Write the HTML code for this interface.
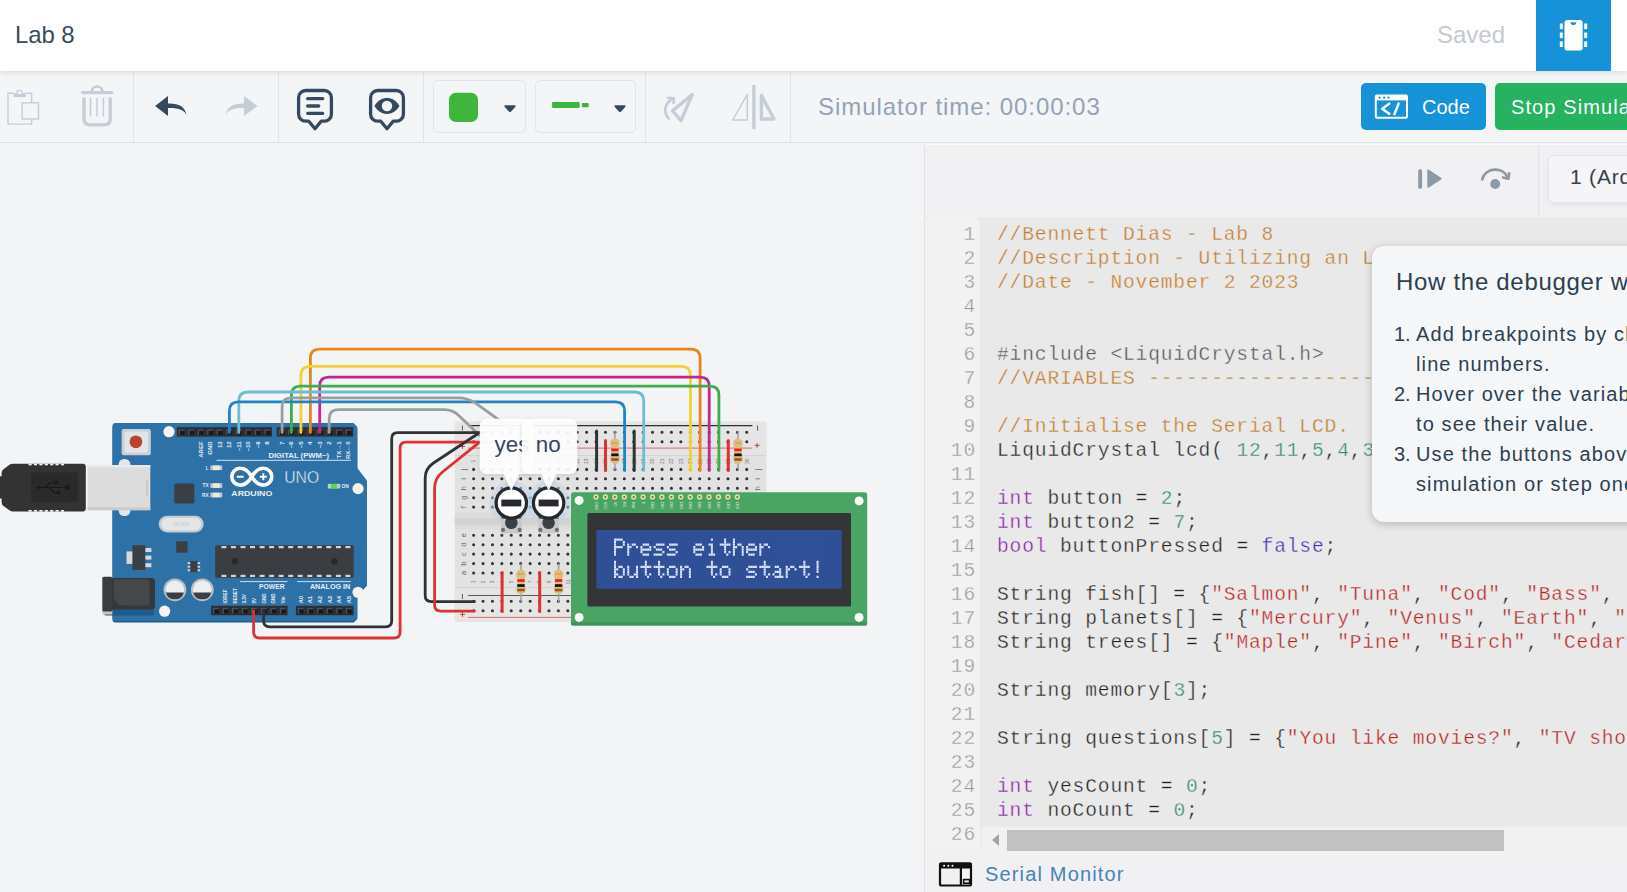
<!DOCTYPE html>
<html>
<head>
<meta charset="utf-8">
<title>Lab 8</title>
<style>
*{box-sizing:border-box;margin:0;padding:0}
html,body{width:1627px;height:892px;overflow:hidden;background:#f3f4f6;font-family:"Liberation Sans",sans-serif;}
#hdr{position:absolute;left:0;top:0;width:1627px;height:71px;background:#fff;z-index:5;box-shadow:0 1px 6px rgba(0,0,0,.13);}
#title{position:absolute;left:15px;top:21px;font-size:24px;color:#3a4b5c;letter-spacing:-0.100px}
#saved{position:absolute;left:1437px;top:21px;font-size:24px;color:#c5cad1;}
#chip{position:absolute;left:1536px;top:0;width:75px;height:71px;background:#1592d8;}
#tb{position:absolute;left:0;top:70px;width:1627px;height:73px;background:#f3f5f7;border-bottom:1px solid #dcdfe3;z-index:4}
.sep{position:absolute;top:0;width:1px;height:72px;background:#e0e3e7}
#simtime{position:absolute;left:818px;top:23px;font-size:24px;color:#93a3b5;letter-spacing:0.940px;white-space:nowrap}
.btn{position:absolute;top:13px;height:47px;border-radius:5px;color:#fff;font-size:20px;line-height:47px;white-space:nowrap;overflow:hidden}
#codebtn{left:1361px;width:125px;background:#1592d8;}
#stopbtn{left:1495px;width:140px;background:#27b25f;padding-left:16px;padding-top:0.600px;letter-spacing:1.100px}
.dd{position:absolute;top:10px;height:53px;border:1px solid #e1e4e8;border-radius:5px}
#canvas{position:absolute;left:0;top:144px;width:925px;height:748px;background:#f3f4f6;overflow:hidden}
#cp{position:absolute;left:924px;top:144px;width:703px;height:748px;background:#f1f1f3;border-left:1px solid #e1e3e6;border-top:1px solid #fafafb;overflow:hidden}
#cptop{position:absolute;left:0;top:-1px;width:703px;height:72px;}
#ed{position:absolute;left:1px;top:72px;width:702px;height:634px;background:#e9e9e9;overflow:hidden}
#gut{position:absolute;left:0;top:0;width:54px;height:634px;background:#f2f2f2;border-radius:6px 6px 0 0}
.ln{position:absolute;left:0;width:50px;text-align:right;font:19.600px/24px "Liberation Mono",monospace;letter-spacing:0.840px;color:#999;-webkit-text-stroke:0.350px #f3f3f3}
.cl{position:absolute;left:71px;white-space:pre;font:19.600px/24px "Liberation Mono",monospace;letter-spacing:0.840px;color:#222;-webkit-text-stroke:0.350px #e9e9e9}
.c{color:#c47c2c}.k{color:#8a1ea8}.s{color:#b8251f}.n{color:#2f8a6a}.p{color:#555}.b{color:#3b2fb5}
#lines{position:absolute;left:0;top:0px}
#hs{position:absolute;left:55px;top:610px;width:647px;height:24px;background:#f1f1f1}
#hst{position:absolute;left:26px;top:3px;width:497px;height:20.500px;background:#c1c1c1}
#hsa{position:absolute;left:11px;top:7px;width:0;height:0;border-top:6px solid transparent;border-bottom:6px solid transparent;border-right:7px solid #a3a3a3}
#sm{position:absolute;left:0;top:706px;width:703px;height:42px;background:#f1f1f3}
#smt{position:absolute;left:60px;top:12px;font-size:20px;color:#4683b5;letter-spacing:1.160px;white-space:nowrap}
#brd{position:absolute;left:623px;top:11px;width:200px;height:48px;border:1px solid #e4e5e8;border-radius:6px;background:#f5f5f7;box-shadow:0 2px 5px rgba(0,0,0,.06);font-size:21px;line-height:42px;padding-left:21px;color:#364049;letter-spacing:0.800px;white-space:nowrap}
#tip{position:absolute;left:447px;top:101px;width:300px;height:276px;background:#f6f7f9;border-radius:12px;box-shadow:0 2px 8px rgba(0,0,0,.22);color:#2c4150}
#tip h3{position:absolute;left:24px;top:22px;font-size:24px;font-weight:normal;white-space:nowrap;letter-spacing:0.700px}
#tip .li{position:absolute;left:22px;font-size:20px;line-height:24px;white-space:nowrap}
#tip .lt{position:absolute;left:44px;font-size:20px;line-height:24px;letter-spacing:1.120px;white-space:nowrap}
</style>
</head>
<body>
<div id="hdr">
  <div id="title">Lab 8</div>
  <div id="saved">Saved</div>
  <div id="chip"><svg width="75" height="70" viewBox="1536 0 75 70" style="position:absolute;left:0;top:0">
<rect x="1564.5" y="20" width="18.2" height="30.5" rx="2.8" fill="#fff"/>
<path d="M1570.6 22.2h5.6a2.8 2.8 0 0 1-5.6 0z" fill="#1592d8"/>
<g fill="#fff"><rect x="1559.8" y="23.5" width="3" height="5.6"/><rect x="1559.8" y="32.5" width="3" height="5.6"/><rect x="1559.8" y="41.4" width="3" height="5.6"/>
<rect x="1584.2" y="23.5" width="3" height="5.6"/><rect x="1584.2" y="32.5" width="3" height="5.6"/><rect x="1584.2" y="41.4" width="3" height="5.6"/></g>
</svg></div>
</div>
<div id="tb">
  <div class="sep" style="left:133px"></div>
  <div class="sep" style="left:278px"></div>
  <div class="sep" style="left:423px"></div>
  <div class="sep" style="left:645px"></div>
  <div class="sep" style="left:790px"></div>
  <div class="dd" style="left:433px;width:93px"></div>
  <div class="dd" style="left:535px;width:101px"></div>
  <svg id="tbi" width="800" height="73" viewBox="0 70 800 73" style="position:absolute;left:0;top:0">
<!-- paste -->
<g fill="none" stroke="#c5ced8" stroke-width="1.4">
<path d="M13.5 93.3H8v30.8h23.6v-4.6M25.8 93.3h5.8v8.6"/>
<path d="M16.6 89.9h6v3.4h3.2v3.8H13.5v-3.8h3.1z" fill="#c5ced8" stroke="none"/>
<rect x="17.9" y="91" width="3.4" height="3" fill="#f3f5f7" stroke="none"/>
<rect x="22.2" y="102.8" width="16.3" height="16.2"/>
</g>
<!-- trash -->
<g fill="none" stroke="#c5ced8" stroke-linecap="round">
<path d="M82.4 92.6h29.4" stroke-width="3.2"/>
<path d="M91.8 91.4c0-6.6 10.6-6.6 10.6 0" stroke-width="2.6"/>
<path d="M84 97.5v21.6q0 5.8 5.8 5.8h14.6q5.8 0 5.8-5.8V97.5" stroke-width="3.4" stroke-linecap="butt"/>
<path d="M90.5 97.8v18.6M97 97.8v18.6M103.4 97.8v18.6" stroke-width="1.5" stroke-linecap="butt"/>
</g>
<!-- undo -->
<path d="M155.100 106l12.900-9.900v7.500c10-0.400 17.500 3 18.500 11.900c-1.500-5-7-7.600-18.500-7.400v7.800z" fill="#34495e"/>
<!-- redo -->
<path d="M257.500 106l-13.400-9.900v7.500c-10-0.400-17.500 3-18.500 11.900c1.500-5 7-7.600 18.500-7.400v7.800z" fill="#c5ced8"/>
<!-- note -->
<g fill="none" stroke="#34495e" stroke-width="3.3" stroke-linejoin="round" stroke-linecap="round">
<path d="M305.6 90.5h18.8a7 7 0 0 1 7 7v16.7a7 7 0 0 1-7 7h-3.2l-6.2 7.6l-6.2-7.6h-3.2a7 7 0 0 1-7-7V97.5a7 7 0 0 1 7-7z"/>
<path d="M307.7 98.7h15M307.7 106h11M307.7 113.3h15"/>
<path d="M377.6 90.5h18.8a7 7 0 0 1 7 7v16.7a7 7 0 0 1-7 7h-3.2l-6.2 7.6l-6.2-7.6h-3.2a7 7 0 0 1-7-7V97.5a7 7 0 0 1 7-7z"/>
</g>
<path fill-rule="evenodd" d="M374.5 106c6-10.6 19-10.6 25 0c-6 10.6-19 10.6-25 0zM392.2 106a5.2 5.2 0 1 0-10.4 0a5.2 5.2 0 1 0 10.4 0z" fill="#34495e"/>
<!-- colour dropdown -->
<rect x="449" y="92.8" width="29" height="29.2" rx="7" fill="#40b53e"/>
<path d="M505.2 105.3h9.6q1.4 0.2 0.6 1.4l-4.5 5q-0.9 0.8-1.8 0l-4.5-5q-0.8-1.2 0.6-1.4z" fill="#34495e"/>
<rect x="552.1" y="102" width="27.5" height="5.9" rx="0.8" fill="#40b53e"/>
<rect x="581.9" y="102.9" width="6.8" height="4.3" rx="0.8" fill="#40b53e"/>
<path d="M615.2 105.3h9.6q1.4 0.2 0.6 1.4l-4.5 5q-0.9 0.8-1.8 0l-4.5-5q-0.8-1.2 0.6-1.4z" fill="#34495e"/>
<!-- rotate -->
<g fill="none" stroke="#c5ced8" stroke-linecap="round" stroke-linejoin="round">
<path d="M692.2 94.6L672.6 110.8L680.9 120.6z" stroke-width="3.4"/>
<path d="M668.8 118.4c-5.6-5.6-4.8-13.6 3-19.6" stroke-width="2.8"/>
<path d="M668.2 97.8l5.6 0.4l-0.2 4.8" stroke-width="2.6"/>
</g>
<!-- mirror -->
<g fill="none" stroke="#c5ced8" stroke-linecap="round" stroke-linejoin="round">
<path d="M753.9 86.2v41.6" stroke-width="3.4"/>
<path d="M747.3 94.4v25.6h-14.6z" stroke-width="1.5"/>
<path d="M761.4 95.4v23.6h12.6z" stroke-width="3.4"/>
</g>
</svg>
  <div id="simtime">Simulator time: 00:00:03</div>
  <div class="btn" id="codebtn"><svg width="36" height="28" viewBox="1373 93 36 28" style="position:absolute;left:12px;top:10px">
<rect x="1375.8" y="95.5" width="31.2" height="22.2" rx="1.2" fill="none" stroke="#fff" stroke-width="2"/>
<rect x="1375.8" y="95" width="31.2" height="5.4" fill="#fff"/>
<circle cx="1379.6" cy="97.6" r="1.15" fill="#1592d8"/><circle cx="1384.1" cy="97.6" r="1.15" fill="#1592d8"/><circle cx="1388.6" cy="97.6" r="1.15" fill="#1592d8"/>
<path d="M1389.2 103.8l-7 5l7 5M1398.6 103.6l-4.2 10.6" fill="none" stroke="#fff" stroke-width="2.5" stroke-linecap="round" stroke-linejoin="round"/>
</svg><span style="position:absolute;left:61px;top:0.600px">Code</span></div>
  <div class="btn" id="stopbtn">Stop Simulation</div>
</div>
<div id="canvas"><!--CANVAS--><svg width="925" height="748" viewBox="0 144 925 748" style="position:absolute;left:0;top:0" font-family="Liberation Sans, sans-serif">
<rect x="454.8" y="421.5" width="311.59999999999997" height="200.5" rx="2.5" fill="#e2e2e2"/>
<rect x="454.8" y="422.5" width="311.59999999999997" height="32.5" fill="#e5e5e5"/>
<rect x="454.8" y="588" width="311.59999999999997" height="33" fill="#e5e5e5"/>
<rect x="454.8" y="512.4" width="311.59999999999997" height="16.8" fill="#dcdcdc"/>
<rect x="454.8" y="518" width="311.59999999999997" height="6.8" fill="#d3d3d3"/>
<rect x="454.8" y="455" width="311.59999999999997" height="0.9" fill="#d2d2d2"/><rect x="454.8" y="587.3" width="311.59999999999997" height="0.9" fill="#d2d2d2"/>
<path d="M472.1 469.4a1.55 1.55 0 1 0 3.1 0a1.55 1.55 0 1 0-3.1 0zM472.1 478.8a1.55 1.55 0 1 0 3.1 0a1.55 1.55 0 1 0-3.1 0zM472.1 488.2a1.55 1.55 0 1 0 3.1 0a1.55 1.55 0 1 0-3.1 0zM472.1 497.7a1.55 1.55 0 1 0 3.1 0a1.55 1.55 0 1 0-3.1 0zM472.1 507.1a1.55 1.55 0 1 0 3.1 0a1.55 1.55 0 1 0-3.1 0zM472.1 535.3a1.55 1.55 0 1 0 3.1 0a1.55 1.55 0 1 0-3.1 0zM472.1 544.7a1.55 1.55 0 1 0 3.1 0a1.55 1.55 0 1 0-3.1 0zM472.1 554.1a1.55 1.55 0 1 0 3.1 0a1.55 1.55 0 1 0-3.1 0zM472.1 563.6a1.55 1.55 0 1 0 3.1 0a1.55 1.55 0 1 0-3.1 0zM472.1 573.0a1.55 1.55 0 1 0 3.1 0a1.55 1.55 0 1 0-3.1 0zM472.1 432.3a1.55 1.55 0 1 0 3.1 0a1.55 1.55 0 1 0-3.1 0zM472.1 441.7a1.55 1.55 0 1 0 3.1 0a1.55 1.55 0 1 0-3.1 0zM472.1 601.2a1.55 1.55 0 1 0 3.1 0a1.55 1.55 0 1 0-3.1 0zM472.1 610.7a1.55 1.55 0 1 0 3.1 0a1.55 1.55 0 1 0-3.1 0zM481.5 469.4a1.55 1.55 0 1 0 3.1 0a1.55 1.55 0 1 0-3.1 0zM481.5 478.8a1.55 1.55 0 1 0 3.1 0a1.55 1.55 0 1 0-3.1 0zM481.5 488.2a1.55 1.55 0 1 0 3.1 0a1.55 1.55 0 1 0-3.1 0zM481.5 497.7a1.55 1.55 0 1 0 3.1 0a1.55 1.55 0 1 0-3.1 0zM481.5 507.1a1.55 1.55 0 1 0 3.1 0a1.55 1.55 0 1 0-3.1 0zM481.5 535.3a1.55 1.55 0 1 0 3.1 0a1.55 1.55 0 1 0-3.1 0zM481.5 544.7a1.55 1.55 0 1 0 3.1 0a1.55 1.55 0 1 0-3.1 0zM481.5 554.1a1.55 1.55 0 1 0 3.1 0a1.55 1.55 0 1 0-3.1 0zM481.5 563.6a1.55 1.55 0 1 0 3.1 0a1.55 1.55 0 1 0-3.1 0zM481.5 573.0a1.55 1.55 0 1 0 3.1 0a1.55 1.55 0 1 0-3.1 0zM481.5 432.3a1.55 1.55 0 1 0 3.1 0a1.55 1.55 0 1 0-3.1 0zM481.5 441.7a1.55 1.55 0 1 0 3.1 0a1.55 1.55 0 1 0-3.1 0zM481.5 601.2a1.55 1.55 0 1 0 3.1 0a1.55 1.55 0 1 0-3.1 0zM481.5 610.7a1.55 1.55 0 1 0 3.1 0a1.55 1.55 0 1 0-3.1 0zM490.9 469.4a1.55 1.55 0 1 0 3.1 0a1.55 1.55 0 1 0-3.1 0zM490.9 478.8a1.55 1.55 0 1 0 3.1 0a1.55 1.55 0 1 0-3.1 0zM490.9 488.2a1.55 1.55 0 1 0 3.1 0a1.55 1.55 0 1 0-3.1 0zM490.9 497.7a1.55 1.55 0 1 0 3.1 0a1.55 1.55 0 1 0-3.1 0zM490.9 507.1a1.55 1.55 0 1 0 3.1 0a1.55 1.55 0 1 0-3.1 0zM490.9 535.3a1.55 1.55 0 1 0 3.1 0a1.55 1.55 0 1 0-3.1 0zM490.9 544.7a1.55 1.55 0 1 0 3.1 0a1.55 1.55 0 1 0-3.1 0zM490.9 554.1a1.55 1.55 0 1 0 3.1 0a1.55 1.55 0 1 0-3.1 0zM490.9 563.6a1.55 1.55 0 1 0 3.1 0a1.55 1.55 0 1 0-3.1 0zM490.9 573.0a1.55 1.55 0 1 0 3.1 0a1.55 1.55 0 1 0-3.1 0zM490.9 432.3a1.55 1.55 0 1 0 3.1 0a1.55 1.55 0 1 0-3.1 0zM490.9 441.7a1.55 1.55 0 1 0 3.1 0a1.55 1.55 0 1 0-3.1 0zM490.9 601.2a1.55 1.55 0 1 0 3.1 0a1.55 1.55 0 1 0-3.1 0zM490.9 610.7a1.55 1.55 0 1 0 3.1 0a1.55 1.55 0 1 0-3.1 0zM500.3 469.4a1.55 1.55 0 1 0 3.1 0a1.55 1.55 0 1 0-3.1 0zM500.3 478.8a1.55 1.55 0 1 0 3.1 0a1.55 1.55 0 1 0-3.1 0zM500.3 488.2a1.55 1.55 0 1 0 3.1 0a1.55 1.55 0 1 0-3.1 0zM500.3 497.7a1.55 1.55 0 1 0 3.1 0a1.55 1.55 0 1 0-3.1 0zM500.3 507.1a1.55 1.55 0 1 0 3.1 0a1.55 1.55 0 1 0-3.1 0zM500.3 535.3a1.55 1.55 0 1 0 3.1 0a1.55 1.55 0 1 0-3.1 0zM500.3 544.7a1.55 1.55 0 1 0 3.1 0a1.55 1.55 0 1 0-3.1 0zM500.3 554.1a1.55 1.55 0 1 0 3.1 0a1.55 1.55 0 1 0-3.1 0zM500.3 563.6a1.55 1.55 0 1 0 3.1 0a1.55 1.55 0 1 0-3.1 0zM500.3 573.0a1.55 1.55 0 1 0 3.1 0a1.55 1.55 0 1 0-3.1 0zM500.3 432.3a1.55 1.55 0 1 0 3.1 0a1.55 1.55 0 1 0-3.1 0zM500.3 441.7a1.55 1.55 0 1 0 3.1 0a1.55 1.55 0 1 0-3.1 0zM500.3 601.2a1.55 1.55 0 1 0 3.1 0a1.55 1.55 0 1 0-3.1 0zM500.3 610.7a1.55 1.55 0 1 0 3.1 0a1.55 1.55 0 1 0-3.1 0zM509.7 469.4a1.55 1.55 0 1 0 3.1 0a1.55 1.55 0 1 0-3.1 0zM509.7 478.8a1.55 1.55 0 1 0 3.1 0a1.55 1.55 0 1 0-3.1 0zM509.7 488.2a1.55 1.55 0 1 0 3.1 0a1.55 1.55 0 1 0-3.1 0zM509.7 497.7a1.55 1.55 0 1 0 3.1 0a1.55 1.55 0 1 0-3.1 0zM509.7 507.1a1.55 1.55 0 1 0 3.1 0a1.55 1.55 0 1 0-3.1 0zM509.7 535.3a1.55 1.55 0 1 0 3.1 0a1.55 1.55 0 1 0-3.1 0zM509.7 544.7a1.55 1.55 0 1 0 3.1 0a1.55 1.55 0 1 0-3.1 0zM509.7 554.1a1.55 1.55 0 1 0 3.1 0a1.55 1.55 0 1 0-3.1 0zM509.7 563.6a1.55 1.55 0 1 0 3.1 0a1.55 1.55 0 1 0-3.1 0zM509.7 573.0a1.55 1.55 0 1 0 3.1 0a1.55 1.55 0 1 0-3.1 0zM509.7 432.3a1.55 1.55 0 1 0 3.1 0a1.55 1.55 0 1 0-3.1 0zM509.7 441.7a1.55 1.55 0 1 0 3.1 0a1.55 1.55 0 1 0-3.1 0zM509.7 601.2a1.55 1.55 0 1 0 3.1 0a1.55 1.55 0 1 0-3.1 0zM509.7 610.7a1.55 1.55 0 1 0 3.1 0a1.55 1.55 0 1 0-3.1 0zM519.2 469.4a1.55 1.55 0 1 0 3.1 0a1.55 1.55 0 1 0-3.1 0zM519.2 478.8a1.55 1.55 0 1 0 3.1 0a1.55 1.55 0 1 0-3.1 0zM519.2 488.2a1.55 1.55 0 1 0 3.1 0a1.55 1.55 0 1 0-3.1 0zM519.2 497.7a1.55 1.55 0 1 0 3.1 0a1.55 1.55 0 1 0-3.1 0zM519.2 507.1a1.55 1.55 0 1 0 3.1 0a1.55 1.55 0 1 0-3.1 0zM519.2 535.3a1.55 1.55 0 1 0 3.1 0a1.55 1.55 0 1 0-3.1 0zM519.2 544.7a1.55 1.55 0 1 0 3.1 0a1.55 1.55 0 1 0-3.1 0zM519.2 554.1a1.55 1.55 0 1 0 3.1 0a1.55 1.55 0 1 0-3.1 0zM519.2 563.6a1.55 1.55 0 1 0 3.1 0a1.55 1.55 0 1 0-3.1 0zM519.2 573.0a1.55 1.55 0 1 0 3.1 0a1.55 1.55 0 1 0-3.1 0zM519.2 432.3a1.55 1.55 0 1 0 3.1 0a1.55 1.55 0 1 0-3.1 0zM519.2 441.7a1.55 1.55 0 1 0 3.1 0a1.55 1.55 0 1 0-3.1 0zM519.2 601.2a1.55 1.55 0 1 0 3.1 0a1.55 1.55 0 1 0-3.1 0zM519.2 610.7a1.55 1.55 0 1 0 3.1 0a1.55 1.55 0 1 0-3.1 0zM528.6 469.4a1.55 1.55 0 1 0 3.1 0a1.55 1.55 0 1 0-3.1 0zM528.6 478.8a1.55 1.55 0 1 0 3.1 0a1.55 1.55 0 1 0-3.1 0zM528.6 488.2a1.55 1.55 0 1 0 3.1 0a1.55 1.55 0 1 0-3.1 0zM528.6 497.7a1.55 1.55 0 1 0 3.1 0a1.55 1.55 0 1 0-3.1 0zM528.6 507.1a1.55 1.55 0 1 0 3.1 0a1.55 1.55 0 1 0-3.1 0zM528.6 535.3a1.55 1.55 0 1 0 3.1 0a1.55 1.55 0 1 0-3.1 0zM528.6 544.7a1.55 1.55 0 1 0 3.1 0a1.55 1.55 0 1 0-3.1 0zM528.6 554.1a1.55 1.55 0 1 0 3.1 0a1.55 1.55 0 1 0-3.1 0zM528.6 563.6a1.55 1.55 0 1 0 3.1 0a1.55 1.55 0 1 0-3.1 0zM528.6 573.0a1.55 1.55 0 1 0 3.1 0a1.55 1.55 0 1 0-3.1 0zM528.6 432.3a1.55 1.55 0 1 0 3.1 0a1.55 1.55 0 1 0-3.1 0zM528.6 441.7a1.55 1.55 0 1 0 3.1 0a1.55 1.55 0 1 0-3.1 0zM528.6 601.2a1.55 1.55 0 1 0 3.1 0a1.55 1.55 0 1 0-3.1 0zM528.6 610.7a1.55 1.55 0 1 0 3.1 0a1.55 1.55 0 1 0-3.1 0zM538.0 469.4a1.55 1.55 0 1 0 3.1 0a1.55 1.55 0 1 0-3.1 0zM538.0 478.8a1.55 1.55 0 1 0 3.1 0a1.55 1.55 0 1 0-3.1 0zM538.0 488.2a1.55 1.55 0 1 0 3.1 0a1.55 1.55 0 1 0-3.1 0zM538.0 497.7a1.55 1.55 0 1 0 3.1 0a1.55 1.55 0 1 0-3.1 0zM538.0 507.1a1.55 1.55 0 1 0 3.1 0a1.55 1.55 0 1 0-3.1 0zM538.0 535.3a1.55 1.55 0 1 0 3.1 0a1.55 1.55 0 1 0-3.1 0zM538.0 544.7a1.55 1.55 0 1 0 3.1 0a1.55 1.55 0 1 0-3.1 0zM538.0 554.1a1.55 1.55 0 1 0 3.1 0a1.55 1.55 0 1 0-3.1 0zM538.0 563.6a1.55 1.55 0 1 0 3.1 0a1.55 1.55 0 1 0-3.1 0zM538.0 573.0a1.55 1.55 0 1 0 3.1 0a1.55 1.55 0 1 0-3.1 0zM538.0 432.3a1.55 1.55 0 1 0 3.1 0a1.55 1.55 0 1 0-3.1 0zM538.0 441.7a1.55 1.55 0 1 0 3.1 0a1.55 1.55 0 1 0-3.1 0zM538.0 601.2a1.55 1.55 0 1 0 3.1 0a1.55 1.55 0 1 0-3.1 0zM538.0 610.7a1.55 1.55 0 1 0 3.1 0a1.55 1.55 0 1 0-3.1 0zM547.4 469.4a1.55 1.55 0 1 0 3.1 0a1.55 1.55 0 1 0-3.1 0zM547.4 478.8a1.55 1.55 0 1 0 3.1 0a1.55 1.55 0 1 0-3.1 0zM547.4 488.2a1.55 1.55 0 1 0 3.1 0a1.55 1.55 0 1 0-3.1 0zM547.4 497.7a1.55 1.55 0 1 0 3.1 0a1.55 1.55 0 1 0-3.1 0zM547.4 507.1a1.55 1.55 0 1 0 3.1 0a1.55 1.55 0 1 0-3.1 0zM547.4 535.3a1.55 1.55 0 1 0 3.1 0a1.55 1.55 0 1 0-3.1 0zM547.4 544.7a1.55 1.55 0 1 0 3.1 0a1.55 1.55 0 1 0-3.1 0zM547.4 554.1a1.55 1.55 0 1 0 3.1 0a1.55 1.55 0 1 0-3.1 0zM547.4 563.6a1.55 1.55 0 1 0 3.1 0a1.55 1.55 0 1 0-3.1 0zM547.4 573.0a1.55 1.55 0 1 0 3.1 0a1.55 1.55 0 1 0-3.1 0zM547.4 432.3a1.55 1.55 0 1 0 3.1 0a1.55 1.55 0 1 0-3.1 0zM547.4 441.7a1.55 1.55 0 1 0 3.1 0a1.55 1.55 0 1 0-3.1 0zM547.4 601.2a1.55 1.55 0 1 0 3.1 0a1.55 1.55 0 1 0-3.1 0zM547.4 610.7a1.55 1.55 0 1 0 3.1 0a1.55 1.55 0 1 0-3.1 0zM556.8 469.4a1.55 1.55 0 1 0 3.1 0a1.55 1.55 0 1 0-3.1 0zM556.8 478.8a1.55 1.55 0 1 0 3.1 0a1.55 1.55 0 1 0-3.1 0zM556.8 488.2a1.55 1.55 0 1 0 3.1 0a1.55 1.55 0 1 0-3.1 0zM556.8 497.7a1.55 1.55 0 1 0 3.1 0a1.55 1.55 0 1 0-3.1 0zM556.8 507.1a1.55 1.55 0 1 0 3.1 0a1.55 1.55 0 1 0-3.1 0zM556.8 535.3a1.55 1.55 0 1 0 3.1 0a1.55 1.55 0 1 0-3.1 0zM556.8 544.7a1.55 1.55 0 1 0 3.1 0a1.55 1.55 0 1 0-3.1 0zM556.8 554.1a1.55 1.55 0 1 0 3.1 0a1.55 1.55 0 1 0-3.1 0zM556.8 563.6a1.55 1.55 0 1 0 3.1 0a1.55 1.55 0 1 0-3.1 0zM556.8 573.0a1.55 1.55 0 1 0 3.1 0a1.55 1.55 0 1 0-3.1 0zM556.8 432.3a1.55 1.55 0 1 0 3.1 0a1.55 1.55 0 1 0-3.1 0zM556.8 441.7a1.55 1.55 0 1 0 3.1 0a1.55 1.55 0 1 0-3.1 0zM556.8 601.2a1.55 1.55 0 1 0 3.1 0a1.55 1.55 0 1 0-3.1 0zM556.8 610.7a1.55 1.55 0 1 0 3.1 0a1.55 1.55 0 1 0-3.1 0zM566.3 469.4a1.55 1.55 0 1 0 3.1 0a1.55 1.55 0 1 0-3.1 0zM566.3 478.8a1.55 1.55 0 1 0 3.1 0a1.55 1.55 0 1 0-3.1 0zM566.3 488.2a1.55 1.55 0 1 0 3.1 0a1.55 1.55 0 1 0-3.1 0zM566.3 497.7a1.55 1.55 0 1 0 3.1 0a1.55 1.55 0 1 0-3.1 0zM566.3 507.1a1.55 1.55 0 1 0 3.1 0a1.55 1.55 0 1 0-3.1 0zM566.3 535.3a1.55 1.55 0 1 0 3.1 0a1.55 1.55 0 1 0-3.1 0zM566.3 544.7a1.55 1.55 0 1 0 3.1 0a1.55 1.55 0 1 0-3.1 0zM566.3 554.1a1.55 1.55 0 1 0 3.1 0a1.55 1.55 0 1 0-3.1 0zM566.3 563.6a1.55 1.55 0 1 0 3.1 0a1.55 1.55 0 1 0-3.1 0zM566.3 573.0a1.55 1.55 0 1 0 3.1 0a1.55 1.55 0 1 0-3.1 0zM566.3 432.3a1.55 1.55 0 1 0 3.1 0a1.55 1.55 0 1 0-3.1 0zM566.3 441.7a1.55 1.55 0 1 0 3.1 0a1.55 1.55 0 1 0-3.1 0zM566.3 601.2a1.55 1.55 0 1 0 3.1 0a1.55 1.55 0 1 0-3.1 0zM566.3 610.7a1.55 1.55 0 1 0 3.1 0a1.55 1.55 0 1 0-3.1 0zM575.7 469.4a1.55 1.55 0 1 0 3.1 0a1.55 1.55 0 1 0-3.1 0zM575.7 478.8a1.55 1.55 0 1 0 3.1 0a1.55 1.55 0 1 0-3.1 0zM575.7 488.2a1.55 1.55 0 1 0 3.1 0a1.55 1.55 0 1 0-3.1 0zM575.7 497.7a1.55 1.55 0 1 0 3.1 0a1.55 1.55 0 1 0-3.1 0zM575.7 507.1a1.55 1.55 0 1 0 3.1 0a1.55 1.55 0 1 0-3.1 0zM575.7 535.3a1.55 1.55 0 1 0 3.1 0a1.55 1.55 0 1 0-3.1 0zM575.7 544.7a1.55 1.55 0 1 0 3.1 0a1.55 1.55 0 1 0-3.1 0zM575.7 554.1a1.55 1.55 0 1 0 3.1 0a1.55 1.55 0 1 0-3.1 0zM575.7 563.6a1.55 1.55 0 1 0 3.1 0a1.55 1.55 0 1 0-3.1 0zM575.7 573.0a1.55 1.55 0 1 0 3.1 0a1.55 1.55 0 1 0-3.1 0zM575.7 432.3a1.55 1.55 0 1 0 3.1 0a1.55 1.55 0 1 0-3.1 0zM575.7 441.7a1.55 1.55 0 1 0 3.1 0a1.55 1.55 0 1 0-3.1 0zM575.7 601.2a1.55 1.55 0 1 0 3.1 0a1.55 1.55 0 1 0-3.1 0zM575.7 610.7a1.55 1.55 0 1 0 3.1 0a1.55 1.55 0 1 0-3.1 0zM585.1 469.4a1.55 1.55 0 1 0 3.1 0a1.55 1.55 0 1 0-3.1 0zM585.1 478.8a1.55 1.55 0 1 0 3.1 0a1.55 1.55 0 1 0-3.1 0zM585.1 488.2a1.55 1.55 0 1 0 3.1 0a1.55 1.55 0 1 0-3.1 0zM585.1 497.7a1.55 1.55 0 1 0 3.1 0a1.55 1.55 0 1 0-3.1 0zM585.1 507.1a1.55 1.55 0 1 0 3.1 0a1.55 1.55 0 1 0-3.1 0zM585.1 535.3a1.55 1.55 0 1 0 3.1 0a1.55 1.55 0 1 0-3.1 0zM585.1 544.7a1.55 1.55 0 1 0 3.1 0a1.55 1.55 0 1 0-3.1 0zM585.1 554.1a1.55 1.55 0 1 0 3.1 0a1.55 1.55 0 1 0-3.1 0zM585.1 563.6a1.55 1.55 0 1 0 3.1 0a1.55 1.55 0 1 0-3.1 0zM585.1 573.0a1.55 1.55 0 1 0 3.1 0a1.55 1.55 0 1 0-3.1 0zM585.1 432.3a1.55 1.55 0 1 0 3.1 0a1.55 1.55 0 1 0-3.1 0zM585.1 441.7a1.55 1.55 0 1 0 3.1 0a1.55 1.55 0 1 0-3.1 0zM585.1 601.2a1.55 1.55 0 1 0 3.1 0a1.55 1.55 0 1 0-3.1 0zM585.1 610.7a1.55 1.55 0 1 0 3.1 0a1.55 1.55 0 1 0-3.1 0zM594.5 469.4a1.55 1.55 0 1 0 3.1 0a1.55 1.55 0 1 0-3.1 0zM594.5 478.8a1.55 1.55 0 1 0 3.1 0a1.55 1.55 0 1 0-3.1 0zM594.5 488.2a1.55 1.55 0 1 0 3.1 0a1.55 1.55 0 1 0-3.1 0zM594.5 497.7a1.55 1.55 0 1 0 3.1 0a1.55 1.55 0 1 0-3.1 0zM594.5 507.1a1.55 1.55 0 1 0 3.1 0a1.55 1.55 0 1 0-3.1 0zM594.5 535.3a1.55 1.55 0 1 0 3.1 0a1.55 1.55 0 1 0-3.1 0zM594.5 544.7a1.55 1.55 0 1 0 3.1 0a1.55 1.55 0 1 0-3.1 0zM594.5 554.1a1.55 1.55 0 1 0 3.1 0a1.55 1.55 0 1 0-3.1 0zM594.5 563.6a1.55 1.55 0 1 0 3.1 0a1.55 1.55 0 1 0-3.1 0zM594.5 573.0a1.55 1.55 0 1 0 3.1 0a1.55 1.55 0 1 0-3.1 0zM594.5 432.3a1.55 1.55 0 1 0 3.1 0a1.55 1.55 0 1 0-3.1 0zM594.5 441.7a1.55 1.55 0 1 0 3.1 0a1.55 1.55 0 1 0-3.1 0zM594.5 601.2a1.55 1.55 0 1 0 3.1 0a1.55 1.55 0 1 0-3.1 0zM594.5 610.7a1.55 1.55 0 1 0 3.1 0a1.55 1.55 0 1 0-3.1 0zM603.9 469.4a1.55 1.55 0 1 0 3.1 0a1.55 1.55 0 1 0-3.1 0zM603.9 478.8a1.55 1.55 0 1 0 3.1 0a1.55 1.55 0 1 0-3.1 0zM603.9 488.2a1.55 1.55 0 1 0 3.1 0a1.55 1.55 0 1 0-3.1 0zM603.9 497.7a1.55 1.55 0 1 0 3.1 0a1.55 1.55 0 1 0-3.1 0zM603.9 507.1a1.55 1.55 0 1 0 3.1 0a1.55 1.55 0 1 0-3.1 0zM603.9 535.3a1.55 1.55 0 1 0 3.1 0a1.55 1.55 0 1 0-3.1 0zM603.9 544.7a1.55 1.55 0 1 0 3.1 0a1.55 1.55 0 1 0-3.1 0zM603.9 554.1a1.55 1.55 0 1 0 3.1 0a1.55 1.55 0 1 0-3.1 0zM603.9 563.6a1.55 1.55 0 1 0 3.1 0a1.55 1.55 0 1 0-3.1 0zM603.9 573.0a1.55 1.55 0 1 0 3.1 0a1.55 1.55 0 1 0-3.1 0zM603.9 432.3a1.55 1.55 0 1 0 3.1 0a1.55 1.55 0 1 0-3.1 0zM603.9 441.7a1.55 1.55 0 1 0 3.1 0a1.55 1.55 0 1 0-3.1 0zM603.9 601.2a1.55 1.55 0 1 0 3.1 0a1.55 1.55 0 1 0-3.1 0zM603.9 610.7a1.55 1.55 0 1 0 3.1 0a1.55 1.55 0 1 0-3.1 0zM613.4 469.4a1.55 1.55 0 1 0 3.1 0a1.55 1.55 0 1 0-3.1 0zM613.4 478.8a1.55 1.55 0 1 0 3.1 0a1.55 1.55 0 1 0-3.1 0zM613.4 488.2a1.55 1.55 0 1 0 3.1 0a1.55 1.55 0 1 0-3.1 0zM613.4 497.7a1.55 1.55 0 1 0 3.1 0a1.55 1.55 0 1 0-3.1 0zM613.4 507.1a1.55 1.55 0 1 0 3.1 0a1.55 1.55 0 1 0-3.1 0zM613.4 535.3a1.55 1.55 0 1 0 3.1 0a1.55 1.55 0 1 0-3.1 0zM613.4 544.7a1.55 1.55 0 1 0 3.1 0a1.55 1.55 0 1 0-3.1 0zM613.4 554.1a1.55 1.55 0 1 0 3.1 0a1.55 1.55 0 1 0-3.1 0zM613.4 563.6a1.55 1.55 0 1 0 3.1 0a1.55 1.55 0 1 0-3.1 0zM613.4 573.0a1.55 1.55 0 1 0 3.1 0a1.55 1.55 0 1 0-3.1 0zM613.4 432.3a1.55 1.55 0 1 0 3.1 0a1.55 1.55 0 1 0-3.1 0zM613.4 441.7a1.55 1.55 0 1 0 3.1 0a1.55 1.55 0 1 0-3.1 0zM613.4 601.2a1.55 1.55 0 1 0 3.1 0a1.55 1.55 0 1 0-3.1 0zM613.4 610.7a1.55 1.55 0 1 0 3.1 0a1.55 1.55 0 1 0-3.1 0zM622.8 469.4a1.55 1.55 0 1 0 3.1 0a1.55 1.55 0 1 0-3.1 0zM622.8 478.8a1.55 1.55 0 1 0 3.1 0a1.55 1.55 0 1 0-3.1 0zM622.8 488.2a1.55 1.55 0 1 0 3.1 0a1.55 1.55 0 1 0-3.1 0zM622.8 497.7a1.55 1.55 0 1 0 3.1 0a1.55 1.55 0 1 0-3.1 0zM622.8 507.1a1.55 1.55 0 1 0 3.1 0a1.55 1.55 0 1 0-3.1 0zM622.8 535.3a1.55 1.55 0 1 0 3.1 0a1.55 1.55 0 1 0-3.1 0zM622.8 544.7a1.55 1.55 0 1 0 3.1 0a1.55 1.55 0 1 0-3.1 0zM622.8 554.1a1.55 1.55 0 1 0 3.1 0a1.55 1.55 0 1 0-3.1 0zM622.8 563.6a1.55 1.55 0 1 0 3.1 0a1.55 1.55 0 1 0-3.1 0zM622.8 573.0a1.55 1.55 0 1 0 3.1 0a1.55 1.55 0 1 0-3.1 0zM622.8 432.3a1.55 1.55 0 1 0 3.1 0a1.55 1.55 0 1 0-3.1 0zM622.8 441.7a1.55 1.55 0 1 0 3.1 0a1.55 1.55 0 1 0-3.1 0zM622.8 601.2a1.55 1.55 0 1 0 3.1 0a1.55 1.55 0 1 0-3.1 0zM622.8 610.7a1.55 1.55 0 1 0 3.1 0a1.55 1.55 0 1 0-3.1 0zM632.2 469.4a1.55 1.55 0 1 0 3.1 0a1.55 1.55 0 1 0-3.1 0zM632.2 478.8a1.55 1.55 0 1 0 3.1 0a1.55 1.55 0 1 0-3.1 0zM632.2 488.2a1.55 1.55 0 1 0 3.1 0a1.55 1.55 0 1 0-3.1 0zM632.2 497.7a1.55 1.55 0 1 0 3.1 0a1.55 1.55 0 1 0-3.1 0zM632.2 507.1a1.55 1.55 0 1 0 3.1 0a1.55 1.55 0 1 0-3.1 0zM632.2 535.3a1.55 1.55 0 1 0 3.1 0a1.55 1.55 0 1 0-3.1 0zM632.2 544.7a1.55 1.55 0 1 0 3.1 0a1.55 1.55 0 1 0-3.1 0zM632.2 554.1a1.55 1.55 0 1 0 3.1 0a1.55 1.55 0 1 0-3.1 0zM632.2 563.6a1.55 1.55 0 1 0 3.1 0a1.55 1.55 0 1 0-3.1 0zM632.2 573.0a1.55 1.55 0 1 0 3.1 0a1.55 1.55 0 1 0-3.1 0zM632.2 432.3a1.55 1.55 0 1 0 3.1 0a1.55 1.55 0 1 0-3.1 0zM632.2 441.7a1.55 1.55 0 1 0 3.1 0a1.55 1.55 0 1 0-3.1 0zM632.2 601.2a1.55 1.55 0 1 0 3.1 0a1.55 1.55 0 1 0-3.1 0zM632.2 610.7a1.55 1.55 0 1 0 3.1 0a1.55 1.55 0 1 0-3.1 0zM641.6 469.4a1.55 1.55 0 1 0 3.1 0a1.55 1.55 0 1 0-3.1 0zM641.6 478.8a1.55 1.55 0 1 0 3.1 0a1.55 1.55 0 1 0-3.1 0zM641.6 488.2a1.55 1.55 0 1 0 3.1 0a1.55 1.55 0 1 0-3.1 0zM641.6 497.7a1.55 1.55 0 1 0 3.1 0a1.55 1.55 0 1 0-3.1 0zM641.6 507.1a1.55 1.55 0 1 0 3.1 0a1.55 1.55 0 1 0-3.1 0zM641.6 535.3a1.55 1.55 0 1 0 3.1 0a1.55 1.55 0 1 0-3.1 0zM641.6 544.7a1.55 1.55 0 1 0 3.1 0a1.55 1.55 0 1 0-3.1 0zM641.6 554.1a1.55 1.55 0 1 0 3.1 0a1.55 1.55 0 1 0-3.1 0zM641.6 563.6a1.55 1.55 0 1 0 3.1 0a1.55 1.55 0 1 0-3.1 0zM641.6 573.0a1.55 1.55 0 1 0 3.1 0a1.55 1.55 0 1 0-3.1 0zM641.6 432.3a1.55 1.55 0 1 0 3.1 0a1.55 1.55 0 1 0-3.1 0zM641.6 441.7a1.55 1.55 0 1 0 3.1 0a1.55 1.55 0 1 0-3.1 0zM641.6 601.2a1.55 1.55 0 1 0 3.1 0a1.55 1.55 0 1 0-3.1 0zM641.6 610.7a1.55 1.55 0 1 0 3.1 0a1.55 1.55 0 1 0-3.1 0zM651.0 469.4a1.55 1.55 0 1 0 3.1 0a1.55 1.55 0 1 0-3.1 0zM651.0 478.8a1.55 1.55 0 1 0 3.1 0a1.55 1.55 0 1 0-3.1 0zM651.0 488.2a1.55 1.55 0 1 0 3.1 0a1.55 1.55 0 1 0-3.1 0zM651.0 497.7a1.55 1.55 0 1 0 3.1 0a1.55 1.55 0 1 0-3.1 0zM651.0 507.1a1.55 1.55 0 1 0 3.1 0a1.55 1.55 0 1 0-3.1 0zM651.0 535.3a1.55 1.55 0 1 0 3.1 0a1.55 1.55 0 1 0-3.1 0zM651.0 544.7a1.55 1.55 0 1 0 3.1 0a1.55 1.55 0 1 0-3.1 0zM651.0 554.1a1.55 1.55 0 1 0 3.1 0a1.55 1.55 0 1 0-3.1 0zM651.0 563.6a1.55 1.55 0 1 0 3.1 0a1.55 1.55 0 1 0-3.1 0zM651.0 573.0a1.55 1.55 0 1 0 3.1 0a1.55 1.55 0 1 0-3.1 0zM651.0 432.3a1.55 1.55 0 1 0 3.1 0a1.55 1.55 0 1 0-3.1 0zM651.0 441.7a1.55 1.55 0 1 0 3.1 0a1.55 1.55 0 1 0-3.1 0zM651.0 601.2a1.55 1.55 0 1 0 3.1 0a1.55 1.55 0 1 0-3.1 0zM651.0 610.7a1.55 1.55 0 1 0 3.1 0a1.55 1.55 0 1 0-3.1 0zM660.5 469.4a1.55 1.55 0 1 0 3.1 0a1.55 1.55 0 1 0-3.1 0zM660.5 478.8a1.55 1.55 0 1 0 3.1 0a1.55 1.55 0 1 0-3.1 0zM660.5 488.2a1.55 1.55 0 1 0 3.1 0a1.55 1.55 0 1 0-3.1 0zM660.5 497.7a1.55 1.55 0 1 0 3.1 0a1.55 1.55 0 1 0-3.1 0zM660.5 507.1a1.55 1.55 0 1 0 3.1 0a1.55 1.55 0 1 0-3.1 0zM660.5 535.3a1.55 1.55 0 1 0 3.1 0a1.55 1.55 0 1 0-3.1 0zM660.5 544.7a1.55 1.55 0 1 0 3.1 0a1.55 1.55 0 1 0-3.1 0zM660.5 554.1a1.55 1.55 0 1 0 3.1 0a1.55 1.55 0 1 0-3.1 0zM660.5 563.6a1.55 1.55 0 1 0 3.1 0a1.55 1.55 0 1 0-3.1 0zM660.5 573.0a1.55 1.55 0 1 0 3.1 0a1.55 1.55 0 1 0-3.1 0zM660.5 432.3a1.55 1.55 0 1 0 3.1 0a1.55 1.55 0 1 0-3.1 0zM660.5 441.7a1.55 1.55 0 1 0 3.1 0a1.55 1.55 0 1 0-3.1 0zM660.5 601.2a1.55 1.55 0 1 0 3.1 0a1.55 1.55 0 1 0-3.1 0zM660.5 610.7a1.55 1.55 0 1 0 3.1 0a1.55 1.55 0 1 0-3.1 0zM669.9 469.4a1.55 1.55 0 1 0 3.1 0a1.55 1.55 0 1 0-3.1 0zM669.9 478.8a1.55 1.55 0 1 0 3.1 0a1.55 1.55 0 1 0-3.1 0zM669.9 488.2a1.55 1.55 0 1 0 3.1 0a1.55 1.55 0 1 0-3.1 0zM669.9 497.7a1.55 1.55 0 1 0 3.1 0a1.55 1.55 0 1 0-3.1 0zM669.9 507.1a1.55 1.55 0 1 0 3.1 0a1.55 1.55 0 1 0-3.1 0zM669.9 535.3a1.55 1.55 0 1 0 3.1 0a1.55 1.55 0 1 0-3.1 0zM669.9 544.7a1.55 1.55 0 1 0 3.1 0a1.55 1.55 0 1 0-3.1 0zM669.9 554.1a1.55 1.55 0 1 0 3.1 0a1.55 1.55 0 1 0-3.1 0zM669.9 563.6a1.55 1.55 0 1 0 3.1 0a1.55 1.55 0 1 0-3.1 0zM669.9 573.0a1.55 1.55 0 1 0 3.1 0a1.55 1.55 0 1 0-3.1 0zM669.9 432.3a1.55 1.55 0 1 0 3.1 0a1.55 1.55 0 1 0-3.1 0zM669.9 441.7a1.55 1.55 0 1 0 3.1 0a1.55 1.55 0 1 0-3.1 0zM669.9 601.2a1.55 1.55 0 1 0 3.1 0a1.55 1.55 0 1 0-3.1 0zM669.9 610.7a1.55 1.55 0 1 0 3.1 0a1.55 1.55 0 1 0-3.1 0zM679.3 469.4a1.55 1.55 0 1 0 3.1 0a1.55 1.55 0 1 0-3.1 0zM679.3 478.8a1.55 1.55 0 1 0 3.1 0a1.55 1.55 0 1 0-3.1 0zM679.3 488.2a1.55 1.55 0 1 0 3.1 0a1.55 1.55 0 1 0-3.1 0zM679.3 497.7a1.55 1.55 0 1 0 3.1 0a1.55 1.55 0 1 0-3.1 0zM679.3 507.1a1.55 1.55 0 1 0 3.1 0a1.55 1.55 0 1 0-3.1 0zM679.3 535.3a1.55 1.55 0 1 0 3.1 0a1.55 1.55 0 1 0-3.1 0zM679.3 544.7a1.55 1.55 0 1 0 3.1 0a1.55 1.55 0 1 0-3.1 0zM679.3 554.1a1.55 1.55 0 1 0 3.1 0a1.55 1.55 0 1 0-3.1 0zM679.3 563.6a1.55 1.55 0 1 0 3.1 0a1.55 1.55 0 1 0-3.1 0zM679.3 573.0a1.55 1.55 0 1 0 3.1 0a1.55 1.55 0 1 0-3.1 0zM679.3 432.3a1.55 1.55 0 1 0 3.1 0a1.55 1.55 0 1 0-3.1 0zM679.3 441.7a1.55 1.55 0 1 0 3.1 0a1.55 1.55 0 1 0-3.1 0zM679.3 601.2a1.55 1.55 0 1 0 3.1 0a1.55 1.55 0 1 0-3.1 0zM679.3 610.7a1.55 1.55 0 1 0 3.1 0a1.55 1.55 0 1 0-3.1 0zM688.7 469.4a1.55 1.55 0 1 0 3.1 0a1.55 1.55 0 1 0-3.1 0zM688.7 478.8a1.55 1.55 0 1 0 3.1 0a1.55 1.55 0 1 0-3.1 0zM688.7 488.2a1.55 1.55 0 1 0 3.1 0a1.55 1.55 0 1 0-3.1 0zM688.7 497.7a1.55 1.55 0 1 0 3.1 0a1.55 1.55 0 1 0-3.1 0zM688.7 507.1a1.55 1.55 0 1 0 3.1 0a1.55 1.55 0 1 0-3.1 0zM688.7 535.3a1.55 1.55 0 1 0 3.1 0a1.55 1.55 0 1 0-3.1 0zM688.7 544.7a1.55 1.55 0 1 0 3.1 0a1.55 1.55 0 1 0-3.1 0zM688.7 554.1a1.55 1.55 0 1 0 3.1 0a1.55 1.55 0 1 0-3.1 0zM688.7 563.6a1.55 1.55 0 1 0 3.1 0a1.55 1.55 0 1 0-3.1 0zM688.7 573.0a1.55 1.55 0 1 0 3.1 0a1.55 1.55 0 1 0-3.1 0zM688.7 432.3a1.55 1.55 0 1 0 3.1 0a1.55 1.55 0 1 0-3.1 0zM688.7 441.7a1.55 1.55 0 1 0 3.1 0a1.55 1.55 0 1 0-3.1 0zM688.7 601.2a1.55 1.55 0 1 0 3.1 0a1.55 1.55 0 1 0-3.1 0zM688.7 610.7a1.55 1.55 0 1 0 3.1 0a1.55 1.55 0 1 0-3.1 0zM698.1 469.4a1.55 1.55 0 1 0 3.1 0a1.55 1.55 0 1 0-3.1 0zM698.1 478.8a1.55 1.55 0 1 0 3.1 0a1.55 1.55 0 1 0-3.1 0zM698.1 488.2a1.55 1.55 0 1 0 3.1 0a1.55 1.55 0 1 0-3.1 0zM698.1 497.7a1.55 1.55 0 1 0 3.1 0a1.55 1.55 0 1 0-3.1 0zM698.1 507.1a1.55 1.55 0 1 0 3.1 0a1.55 1.55 0 1 0-3.1 0zM698.1 535.3a1.55 1.55 0 1 0 3.1 0a1.55 1.55 0 1 0-3.1 0zM698.1 544.7a1.55 1.55 0 1 0 3.1 0a1.55 1.55 0 1 0-3.1 0zM698.1 554.1a1.55 1.55 0 1 0 3.1 0a1.55 1.55 0 1 0-3.1 0zM698.1 563.6a1.55 1.55 0 1 0 3.1 0a1.55 1.55 0 1 0-3.1 0zM698.1 573.0a1.55 1.55 0 1 0 3.1 0a1.55 1.55 0 1 0-3.1 0zM698.1 432.3a1.55 1.55 0 1 0 3.1 0a1.55 1.55 0 1 0-3.1 0zM698.1 441.7a1.55 1.55 0 1 0 3.1 0a1.55 1.55 0 1 0-3.1 0zM698.1 601.2a1.55 1.55 0 1 0 3.1 0a1.55 1.55 0 1 0-3.1 0zM698.1 610.7a1.55 1.55 0 1 0 3.1 0a1.55 1.55 0 1 0-3.1 0zM707.6 469.4a1.55 1.55 0 1 0 3.1 0a1.55 1.55 0 1 0-3.1 0zM707.6 478.8a1.55 1.55 0 1 0 3.1 0a1.55 1.55 0 1 0-3.1 0zM707.6 488.2a1.55 1.55 0 1 0 3.1 0a1.55 1.55 0 1 0-3.1 0zM707.6 497.7a1.55 1.55 0 1 0 3.1 0a1.55 1.55 0 1 0-3.1 0zM707.6 507.1a1.55 1.55 0 1 0 3.1 0a1.55 1.55 0 1 0-3.1 0zM707.6 535.3a1.55 1.55 0 1 0 3.1 0a1.55 1.55 0 1 0-3.1 0zM707.6 544.7a1.55 1.55 0 1 0 3.1 0a1.55 1.55 0 1 0-3.1 0zM707.6 554.1a1.55 1.55 0 1 0 3.1 0a1.55 1.55 0 1 0-3.1 0zM707.6 563.6a1.55 1.55 0 1 0 3.1 0a1.55 1.55 0 1 0-3.1 0zM707.6 573.0a1.55 1.55 0 1 0 3.1 0a1.55 1.55 0 1 0-3.1 0zM707.6 432.3a1.55 1.55 0 1 0 3.1 0a1.55 1.55 0 1 0-3.1 0zM707.6 441.7a1.55 1.55 0 1 0 3.1 0a1.55 1.55 0 1 0-3.1 0zM707.6 601.2a1.55 1.55 0 1 0 3.1 0a1.55 1.55 0 1 0-3.1 0zM707.6 610.7a1.55 1.55 0 1 0 3.1 0a1.55 1.55 0 1 0-3.1 0zM717.0 469.4a1.55 1.55 0 1 0 3.1 0a1.55 1.55 0 1 0-3.1 0zM717.0 478.8a1.55 1.55 0 1 0 3.1 0a1.55 1.55 0 1 0-3.1 0zM717.0 488.2a1.55 1.55 0 1 0 3.1 0a1.55 1.55 0 1 0-3.1 0zM717.0 497.7a1.55 1.55 0 1 0 3.1 0a1.55 1.55 0 1 0-3.1 0zM717.0 507.1a1.55 1.55 0 1 0 3.1 0a1.55 1.55 0 1 0-3.1 0zM717.0 535.3a1.55 1.55 0 1 0 3.1 0a1.55 1.55 0 1 0-3.1 0zM717.0 544.7a1.55 1.55 0 1 0 3.1 0a1.55 1.55 0 1 0-3.1 0zM717.0 554.1a1.55 1.55 0 1 0 3.1 0a1.55 1.55 0 1 0-3.1 0zM717.0 563.6a1.55 1.55 0 1 0 3.1 0a1.55 1.55 0 1 0-3.1 0zM717.0 573.0a1.55 1.55 0 1 0 3.1 0a1.55 1.55 0 1 0-3.1 0zM717.0 432.3a1.55 1.55 0 1 0 3.1 0a1.55 1.55 0 1 0-3.1 0zM717.0 441.7a1.55 1.55 0 1 0 3.1 0a1.55 1.55 0 1 0-3.1 0zM717.0 601.2a1.55 1.55 0 1 0 3.1 0a1.55 1.55 0 1 0-3.1 0zM717.0 610.7a1.55 1.55 0 1 0 3.1 0a1.55 1.55 0 1 0-3.1 0zM726.4 469.4a1.55 1.55 0 1 0 3.1 0a1.55 1.55 0 1 0-3.1 0zM726.4 478.8a1.55 1.55 0 1 0 3.1 0a1.55 1.55 0 1 0-3.1 0zM726.4 488.2a1.55 1.55 0 1 0 3.1 0a1.55 1.55 0 1 0-3.1 0zM726.4 497.7a1.55 1.55 0 1 0 3.1 0a1.55 1.55 0 1 0-3.1 0zM726.4 507.1a1.55 1.55 0 1 0 3.1 0a1.55 1.55 0 1 0-3.1 0zM726.4 535.3a1.55 1.55 0 1 0 3.1 0a1.55 1.55 0 1 0-3.1 0zM726.4 544.7a1.55 1.55 0 1 0 3.1 0a1.55 1.55 0 1 0-3.1 0zM726.4 554.1a1.55 1.55 0 1 0 3.1 0a1.55 1.55 0 1 0-3.1 0zM726.4 563.6a1.55 1.55 0 1 0 3.1 0a1.55 1.55 0 1 0-3.1 0zM726.4 573.0a1.55 1.55 0 1 0 3.1 0a1.55 1.55 0 1 0-3.1 0zM726.4 432.3a1.55 1.55 0 1 0 3.1 0a1.55 1.55 0 1 0-3.1 0zM726.4 441.7a1.55 1.55 0 1 0 3.1 0a1.55 1.55 0 1 0-3.1 0zM726.4 601.2a1.55 1.55 0 1 0 3.1 0a1.55 1.55 0 1 0-3.1 0zM726.4 610.7a1.55 1.55 0 1 0 3.1 0a1.55 1.55 0 1 0-3.1 0zM735.8 469.4a1.55 1.55 0 1 0 3.1 0a1.55 1.55 0 1 0-3.1 0zM735.8 478.8a1.55 1.55 0 1 0 3.1 0a1.55 1.55 0 1 0-3.1 0zM735.8 488.2a1.55 1.55 0 1 0 3.1 0a1.55 1.55 0 1 0-3.1 0zM735.8 497.7a1.55 1.55 0 1 0 3.1 0a1.55 1.55 0 1 0-3.1 0zM735.8 507.1a1.55 1.55 0 1 0 3.1 0a1.55 1.55 0 1 0-3.1 0zM735.8 535.3a1.55 1.55 0 1 0 3.1 0a1.55 1.55 0 1 0-3.1 0zM735.8 544.7a1.55 1.55 0 1 0 3.1 0a1.55 1.55 0 1 0-3.1 0zM735.8 554.1a1.55 1.55 0 1 0 3.1 0a1.55 1.55 0 1 0-3.1 0zM735.8 563.6a1.55 1.55 0 1 0 3.1 0a1.55 1.55 0 1 0-3.1 0zM735.8 573.0a1.55 1.55 0 1 0 3.1 0a1.55 1.55 0 1 0-3.1 0zM735.8 432.3a1.55 1.55 0 1 0 3.1 0a1.55 1.55 0 1 0-3.1 0zM735.8 441.7a1.55 1.55 0 1 0 3.1 0a1.55 1.55 0 1 0-3.1 0zM735.8 601.2a1.55 1.55 0 1 0 3.1 0a1.55 1.55 0 1 0-3.1 0zM735.8 610.7a1.55 1.55 0 1 0 3.1 0a1.55 1.55 0 1 0-3.1 0zM745.2 469.4a1.55 1.55 0 1 0 3.1 0a1.55 1.55 0 1 0-3.1 0zM745.2 478.8a1.55 1.55 0 1 0 3.1 0a1.55 1.55 0 1 0-3.1 0zM745.2 488.2a1.55 1.55 0 1 0 3.1 0a1.55 1.55 0 1 0-3.1 0zM745.2 497.7a1.55 1.55 0 1 0 3.1 0a1.55 1.55 0 1 0-3.1 0zM745.2 507.1a1.55 1.55 0 1 0 3.1 0a1.55 1.55 0 1 0-3.1 0zM745.2 535.3a1.55 1.55 0 1 0 3.1 0a1.55 1.55 0 1 0-3.1 0zM745.2 544.7a1.55 1.55 0 1 0 3.1 0a1.55 1.55 0 1 0-3.1 0zM745.2 554.1a1.55 1.55 0 1 0 3.1 0a1.55 1.55 0 1 0-3.1 0zM745.2 563.6a1.55 1.55 0 1 0 3.1 0a1.55 1.55 0 1 0-3.1 0zM745.2 573.0a1.55 1.55 0 1 0 3.1 0a1.55 1.55 0 1 0-3.1 0zM745.2 432.3a1.55 1.55 0 1 0 3.1 0a1.55 1.55 0 1 0-3.1 0zM745.2 441.7a1.55 1.55 0 1 0 3.1 0a1.55 1.55 0 1 0-3.1 0zM745.2 601.2a1.55 1.55 0 1 0 3.1 0a1.55 1.55 0 1 0-3.1 0zM745.2 610.7a1.55 1.55 0 1 0 3.1 0a1.55 1.55 0 1 0-3.1 0z" fill="#343434"/>
<path d="M468.2 425.6H752.4" stroke="#2e2e2e" stroke-width="1.2"/><path d="M468.2 448.1H752.4" stroke="#d66a66" stroke-width="1"/>
<path d="M468.2 595.5H752.4" stroke="#5a5a5a" stroke-width="1"/><path d="M468.2 617.4H752.4" stroke="#d66a66" stroke-width="1"/>
<g stroke="#444" stroke-width="0.9"><path d="M462.4 425.6v5M757.6 425.6v5M462.4 594v5"/></g>
<g stroke="#c8322b" stroke-width="0.9" fill="none"><path d="M460 446.5h5M462.5 444v5M754.6 445.4h5M757.1 442.9v5M460 614.4h5M462.5 611.9v5"/></g>
<g font-size="7.4" fill="#666">
<text transform="translate(465.6 469.4) rotate(-90)" text-anchor="middle">j</text>
<text transform="translate(759.6 469.4) rotate(-90)" text-anchor="middle">j</text>
<text transform="translate(465.6 478.8) rotate(-90)" text-anchor="middle">i</text>
<text transform="translate(759.6 478.8) rotate(-90)" text-anchor="middle">i</text>
<text transform="translate(465.6 488.2) rotate(-90)" text-anchor="middle">h</text>
<text transform="translate(759.6 488.2) rotate(-90)" text-anchor="middle">h</text>
<text transform="translate(465.6 497.7) rotate(-90)" text-anchor="middle">g</text>
<text transform="translate(759.6 497.7) rotate(-90)" text-anchor="middle">g</text>
<text transform="translate(465.6 507.1) rotate(-90)" text-anchor="middle">f</text>
<text transform="translate(759.6 507.1) rotate(-90)" text-anchor="middle">f</text>
<text transform="translate(465.6 535.3) rotate(-90)" text-anchor="middle">e</text>
<text transform="translate(465.6 544.7) rotate(-90)" text-anchor="middle">d</text>
<text transform="translate(465.6 554.1) rotate(-90)" text-anchor="middle">c</text>
<text transform="translate(465.6 563.6) rotate(-90)" text-anchor="middle">b</text>
<text transform="translate(465.6 573.0) rotate(-90)" text-anchor="middle">a</text>
</g>
<g font-size="5" fill="#777">
<text transform="translate(475.4 461.2) rotate(-90)" text-anchor="middle">1</text>
<text transform="translate(475.4 581.8) rotate(-90)" text-anchor="middle">1</text>
<text transform="translate(484.8 461.2) rotate(-90)" text-anchor="middle">2</text>
<text transform="translate(484.8 581.8) rotate(-90)" text-anchor="middle">2</text>
<text transform="translate(494.2 461.2) rotate(-90)" text-anchor="middle">3</text>
<text transform="translate(494.2 581.8) rotate(-90)" text-anchor="middle">3</text>
<text transform="translate(503.7 461.2) rotate(-90)" text-anchor="middle">4</text>
<text transform="translate(503.7 581.8) rotate(-90)" text-anchor="middle">4</text>
<text transform="translate(513.1 461.2) rotate(-90)" text-anchor="middle">5</text>
<text transform="translate(513.1 581.8) rotate(-90)" text-anchor="middle">5</text>
<text transform="translate(522.5 461.2) rotate(-90)" text-anchor="middle">6</text>
<text transform="translate(522.5 581.8) rotate(-90)" text-anchor="middle">6</text>
<text transform="translate(531.9 461.2) rotate(-90)" text-anchor="middle">7</text>
<text transform="translate(531.9 581.8) rotate(-90)" text-anchor="middle">7</text>
<text transform="translate(541.3 461.2) rotate(-90)" text-anchor="middle">8</text>
<text transform="translate(541.3 581.8) rotate(-90)" text-anchor="middle">8</text>
<text transform="translate(550.8 461.2) rotate(-90)" text-anchor="middle">9</text>
<text transform="translate(550.8 581.8) rotate(-90)" text-anchor="middle">9</text>
<text transform="translate(560.2 461.2) rotate(-90)" text-anchor="middle">10</text>
<text transform="translate(560.2 581.8) rotate(-90)" text-anchor="middle">10</text>
<text transform="translate(569.6 461.2) rotate(-90)" text-anchor="middle">11</text>
<text transform="translate(569.6 581.8) rotate(-90)" text-anchor="middle">11</text>
<text transform="translate(579.0 461.2) rotate(-90)" text-anchor="middle">12</text>
<text transform="translate(579.0 581.8) rotate(-90)" text-anchor="middle">12</text>
<text transform="translate(588.4 461.2) rotate(-90)" text-anchor="middle">13</text>
<text transform="translate(588.4 581.8) rotate(-90)" text-anchor="middle">13</text>
<text transform="translate(597.9 461.2) rotate(-90)" text-anchor="middle">14</text>
<text transform="translate(597.9 581.8) rotate(-90)" text-anchor="middle">14</text>
<text transform="translate(607.3 461.2) rotate(-90)" text-anchor="middle">15</text>
<text transform="translate(607.3 581.8) rotate(-90)" text-anchor="middle">15</text>
<text transform="translate(616.7 461.2) rotate(-90)" text-anchor="middle">16</text>
<text transform="translate(616.7 581.8) rotate(-90)" text-anchor="middle">16</text>
<text transform="translate(626.1 461.2) rotate(-90)" text-anchor="middle">17</text>
<text transform="translate(626.1 581.8) rotate(-90)" text-anchor="middle">17</text>
<text transform="translate(635.5 461.2) rotate(-90)" text-anchor="middle">18</text>
<text transform="translate(635.5 581.8) rotate(-90)" text-anchor="middle">18</text>
<text transform="translate(645.0 461.2) rotate(-90)" text-anchor="middle">19</text>
<text transform="translate(645.0 581.8) rotate(-90)" text-anchor="middle">19</text>
<text transform="translate(654.4 461.2) rotate(-90)" text-anchor="middle">20</text>
<text transform="translate(654.4 581.8) rotate(-90)" text-anchor="middle">20</text>
<text transform="translate(663.8 461.2) rotate(-90)" text-anchor="middle">21</text>
<text transform="translate(663.8 581.8) rotate(-90)" text-anchor="middle">21</text>
<text transform="translate(673.2 461.2) rotate(-90)" text-anchor="middle">22</text>
<text transform="translate(673.2 581.8) rotate(-90)" text-anchor="middle">22</text>
<text transform="translate(682.6 461.2) rotate(-90)" text-anchor="middle">23</text>
<text transform="translate(682.6 581.8) rotate(-90)" text-anchor="middle">23</text>
<text transform="translate(692.1 461.2) rotate(-90)" text-anchor="middle">24</text>
<text transform="translate(692.1 581.8) rotate(-90)" text-anchor="middle">24</text>
<text transform="translate(701.5 461.2) rotate(-90)" text-anchor="middle">25</text>
<text transform="translate(701.5 581.8) rotate(-90)" text-anchor="middle">25</text>
<text transform="translate(710.9 461.2) rotate(-90)" text-anchor="middle">26</text>
<text transform="translate(710.9 581.8) rotate(-90)" text-anchor="middle">26</text>
<text transform="translate(720.3 461.2) rotate(-90)" text-anchor="middle">27</text>
<text transform="translate(720.3 581.8) rotate(-90)" text-anchor="middle">27</text>
<text transform="translate(729.7 461.2) rotate(-90)" text-anchor="middle">28</text>
<text transform="translate(729.7 581.8) rotate(-90)" text-anchor="middle">28</text>
<text transform="translate(739.2 461.2) rotate(-90)" text-anchor="middle">29</text>
<text transform="translate(739.2 581.8) rotate(-90)" text-anchor="middle">29</text>
<text transform="translate(748.6 461.2) rotate(-90)" text-anchor="middle">30</text>
<text transform="translate(748.6 581.8) rotate(-90)" text-anchor="middle">30</text>
</g>
<path d="M0 476.200h1.600v-3q0-3 2.600-4.400l5.600-4.200q1.400-0.900 3-0.900h70q3 0 3 3v41.800q0 3-3 3h-70q-1.600 0-3-0.900l-5.600-4.200q-2.600-1.400-2.600-4.400v-3.600h-1.600z" fill="#333"/>
<rect x="28.5" y="463.7" width="3.2" height="1.6" fill="#f3f4f6"/><rect x="28.5" y="510" width="3.2" height="1.600" fill="#f3f4f6"/>
<rect x="33.9" y="463.7" width="3.2" height="1.6" fill="#f3f4f6"/><rect x="33.9" y="510" width="3.2" height="1.600" fill="#f3f4f6"/>
<rect x="39.3" y="463.7" width="3.2" height="1.6" fill="#f3f4f6"/><rect x="39.3" y="510" width="3.2" height="1.600" fill="#f3f4f6"/>
<rect x="44.7" y="463.7" width="3.2" height="1.6" fill="#f3f4f6"/><rect x="44.7" y="510" width="3.2" height="1.600" fill="#f3f4f6"/>
<rect x="50.1" y="463.7" width="3.2" height="1.6" fill="#f3f4f6"/><rect x="50.1" y="510" width="3.2" height="1.600" fill="#f3f4f6"/>
<rect x="55.5" y="463.7" width="3.2" height="1.6" fill="#f3f4f6"/><rect x="55.5" y="510" width="3.2" height="1.600" fill="#f3f4f6"/>
<rect x="60.9" y="463.7" width="3.2" height="1.6" fill="#f3f4f6"/><rect x="60.9" y="510" width="3.2" height="1.600" fill="#f3f4f6"/>
<rect x="31.300" y="472.600" width="46.400" height="29.400" fill="#2a2a2a"/>
<g stroke="#191919" stroke-width="1.2" fill="none"><path d="M39 487.5h27M45 487.5l5-5h5M49 487.5l5 5h4"/></g><circle cx="67.5" cy="487.5" r="2.6" fill="#191919"/><rect x="54.5" y="480.8" width="3.2" height="3.2" fill="#191919"/><circle cx="58.5" cy="492.5" r="1.7" fill="#191919"/><path d="M36 487.5l4-2v4z" fill="#191919"/>
<path d="M115.5 423H353.6L357.3 426.9V468L366.9 480.4V584L357.3 595V617.6L353.8 621H115.5q-3 0-3-3V426q0-3 3-3z" fill="#1f5a8c" transform="translate(0,1.5)"/>
<path d="M115.5 423H353.6L357.3 426.9V468L366.9 480.4V584L357.3 595V617.6L353.8 621H115.5q-3 0-3-3V426q0-3 3-3z" fill="#2e71a6"/>
<rect x="118.600" y="459" width="11.800" height="57" rx="5.500" fill="#e2e6ea"/>
<rect x="87.600" y="465" width="62.700" height="45.200" fill="#dcdcdc"/>
<rect x="87.600" y="465" width="62.700" height="2.400" fill="#e9e9e9"/><rect x="87.600" y="507.400" width="62.700" height="2.800" fill="#cacaca"/><rect x="146.4" y="480" width="1.2" height="16" fill="#bdbdbd"/>
<rect x="104" y="608" width="50" height="7.500" rx="2" fill="#1f5a8c"/>
<rect x="110" y="578" width="45" height="31.600" rx="3.500" fill="#35383b"/><path d="M114 579.200h32.500q3 0 3 3v23.200h-24.500q-11 0-11-11z" fill="#45484b"/>
<rect x="102.300" y="610" width="10.100" height="4.400" rx="1" fill="#c8c8c8"/><rect x="102.300" y="576.700" width="10.100" height="34.700" rx="1.500" fill="#3a3d40"/>
<circle cx="169" cy="431.7" r="5.6" fill="#f5f3ea"/>
<circle cx="164.6" cy="611.2" r="5.6" fill="#f5f3ea"/>
<circle cx="358" cy="488.6" r="5.6" fill="#f5f3ea"/>
<circle cx="358" cy="592.3" r="5.6" fill="#f5f3ea"/>
<rect x="121.6" y="429" width="29.2" height="26.2" rx="2" fill="#c9cfd6"/><rect x="124.4" y="431.4" width="23.6" height="21.4" rx="2" fill="#e1e5e9"/><circle cx="135.9" cy="441.8" r="6.4" fill="#b8432e"/>
<rect x="176.8" y="427.2" width="95.2" height="9.4" fill="#2b2f33"/><rect x="178.6" y="429.2" width="6" height="5.6" fill="#17191b"/><path d="M178.6 429.2h6v1.5h-4.5v4.1h-1.5z" fill="#4d5258"/><rect x="188.1" y="429.2" width="6" height="5.6" fill="#17191b"/><path d="M188.1 429.2h6v1.5h-4.5v4.1h-1.5z" fill="#4d5258"/><rect x="197.6" y="429.2" width="6" height="5.6" fill="#17191b"/><path d="M197.6 429.2h6v1.5h-4.5v4.1h-1.5z" fill="#4d5258"/><rect x="207.1" y="429.2" width="6" height="5.6" fill="#17191b"/><path d="M207.1 429.2h6v1.5h-4.5v4.1h-1.5z" fill="#4d5258"/><rect x="216.6" y="429.2" width="6" height="5.6" fill="#17191b"/><path d="M216.6 429.2h6v1.5h-4.5v4.1h-1.5z" fill="#4d5258"/><rect x="226.2" y="429.2" width="6" height="5.6" fill="#17191b"/><path d="M226.2 429.2h6v1.5h-4.5v4.1h-1.5z" fill="#4d5258"/><rect x="235.7" y="429.2" width="6" height="5.6" fill="#17191b"/><path d="M235.7 429.2h6v1.5h-4.5v4.1h-1.5z" fill="#4d5258"/><rect x="245.2" y="429.2" width="6" height="5.6" fill="#17191b"/><path d="M245.2 429.2h6v1.5h-4.5v4.1h-1.5z" fill="#4d5258"/><rect x="254.7" y="429.2" width="6" height="5.6" fill="#17191b"/><path d="M254.7 429.2h6v1.5h-4.5v4.1h-1.5z" fill="#4d5258"/><rect x="264.2" y="429.2" width="6" height="5.6" fill="#17191b"/><path d="M264.2 429.2h6v1.5h-4.5v4.1h-1.5z" fill="#4d5258"/>
<rect x="276.7" y="427.2" width="76.5" height="9.4" fill="#2b2f33"/><rect x="278.5" y="429.2" width="6" height="5.6" fill="#17191b"/><path d="M278.5 429.2h6v1.5h-4.5v4.1h-1.5z" fill="#4d5258"/><rect x="288.0" y="429.2" width="6" height="5.6" fill="#17191b"/><path d="M288.0 429.2h6v1.5h-4.5v4.1h-1.5z" fill="#4d5258"/><rect x="297.6" y="429.2" width="6" height="5.6" fill="#17191b"/><path d="M297.6 429.2h6v1.5h-4.5v4.1h-1.5z" fill="#4d5258"/><rect x="307.2" y="429.2" width="6" height="5.6" fill="#17191b"/><path d="M307.2 429.2h6v1.5h-4.5v4.1h-1.5z" fill="#4d5258"/><rect x="316.7" y="429.2" width="6" height="5.6" fill="#17191b"/><path d="M316.7 429.2h6v1.5h-4.5v4.1h-1.5z" fill="#4d5258"/><rect x="326.3" y="429.2" width="6" height="5.6" fill="#17191b"/><path d="M326.3 429.2h6v1.5h-4.5v4.1h-1.5z" fill="#4d5258"/><rect x="335.8" y="429.2" width="6" height="5.6" fill="#17191b"/><path d="M335.8 429.2h6v1.5h-4.5v4.1h-1.5z" fill="#4d5258"/><rect x="345.4" y="429.2" width="6" height="5.6" fill="#17191b"/><path d="M345.4 429.2h6v1.5h-4.5v4.1h-1.5z" fill="#4d5258"/>
<rect x="211.1" y="605.8" width="76.5" height="9.4" fill="#2b2f33"/><rect x="212.9" y="607.8" width="6" height="5.6" fill="#17191b"/><path d="M212.9 607.8h6v1.5h-4.5v4.1h-1.5z" fill="#4d5258"/><rect x="222.4" y="607.8" width="6" height="5.6" fill="#17191b"/><path d="M222.4 607.8h6v1.5h-4.5v4.1h-1.5z" fill="#4d5258"/><rect x="232.0" y="607.8" width="6" height="5.6" fill="#17191b"/><path d="M232.0 607.8h6v1.5h-4.5v4.1h-1.5z" fill="#4d5258"/><rect x="241.6" y="607.8" width="6" height="5.6" fill="#17191b"/><path d="M241.6 607.8h6v1.5h-4.5v4.1h-1.5z" fill="#4d5258"/><rect x="251.1" y="607.8" width="6" height="5.6" fill="#17191b"/><path d="M251.1 607.8h6v1.5h-4.5v4.1h-1.5z" fill="#4d5258"/><rect x="260.7" y="607.8" width="6" height="5.6" fill="#17191b"/><path d="M260.7 607.8h6v1.5h-4.5v4.1h-1.5z" fill="#4d5258"/><rect x="270.2" y="607.8" width="6" height="5.6" fill="#17191b"/><path d="M270.2 607.8h6v1.5h-4.5v4.1h-1.5z" fill="#4d5258"/><rect x="279.8" y="607.8" width="6" height="5.6" fill="#17191b"/><path d="M279.8 607.8h6v1.5h-4.5v4.1h-1.5z" fill="#4d5258"/>
<rect x="295.9" y="605.8" width="57.6" height="9.4" fill="#2b2f33"/><rect x="297.7" y="607.8" width="6" height="5.6" fill="#17191b"/><path d="M297.7 607.8h6v1.5h-4.5v4.1h-1.5z" fill="#4d5258"/><rect x="307.3" y="607.8" width="6" height="5.6" fill="#17191b"/><path d="M307.3 607.8h6v1.5h-4.5v4.1h-1.5z" fill="#4d5258"/><rect x="316.9" y="607.8" width="6" height="5.6" fill="#17191b"/><path d="M316.9 607.8h6v1.5h-4.5v4.1h-1.5z" fill="#4d5258"/><rect x="326.5" y="607.8" width="6" height="5.6" fill="#17191b"/><path d="M326.5 607.8h6v1.5h-4.5v4.1h-1.5z" fill="#4d5258"/><rect x="336.1" y="607.8" width="6" height="5.6" fill="#17191b"/><path d="M336.1 607.8h6v1.5h-4.5v4.1h-1.5z" fill="#4d5258"/><rect x="345.7" y="607.8" width="6" height="5.6" fill="#17191b"/><path d="M345.7 607.8h6v1.5h-4.5v4.1h-1.5z" fill="#4d5258"/>
<rect x="174.3" y="483.4" width="20" height="20.2" rx="1.5" fill="#3a3f45"/>
<rect x="176.2" y="541.2" width="11.4" height="11.6" rx="1" fill="#3a3f45"/>
<rect x="158.7" y="515.7" width="45" height="16.8" rx="8.4" fill="#c6cbcf"/><rect x="161.2" y="517.8" width="40" height="12.6" rx="6.3" fill="#e3e5e7"/>
<text x="181.2" y="526.4" font-size="5.6" fill="#ced2d5" text-anchor="middle" font-weight="bold">16.000</text>
<rect x="126.5" y="551.4" width="6.5" height="12.5" fill="#d5d9dd"/><rect x="132.4" y="545.3" width="13" height="24.6" fill="#3a3f45"/>
<rect x="145.4" y="548" width="6" height="4" fill="#d5d9dd"/>
<rect x="145.4" y="555.6" width="6" height="4" fill="#d5d9dd"/>
<rect x="145.4" y="563.2" width="6" height="4" fill="#d5d9dd"/>
<rect x="190.2" y="561" width="7.4" height="11.2" fill="#3a3f45"/>
<rect x="187.6" y="562.2" width="2.6" height="1.8" fill="#d5d9dd"/><rect x="197.6" y="562.2" width="2.6" height="1.8" fill="#d5d9dd"/>
<rect x="187.6" y="565.8" width="2.6" height="1.8" fill="#d5d9dd"/><rect x="197.6" y="565.8" width="2.6" height="1.8" fill="#d5d9dd"/>
<rect x="187.6" y="569.4" width="2.6" height="1.8" fill="#d5d9dd"/><rect x="197.6" y="569.4" width="2.6" height="1.8" fill="#d5d9dd"/>
<circle cx="174.9" cy="589.8" r="11.4" fill="#b9bec3"/><circle cx="174.9" cy="589.8" r="9.4" fill="#eceef0"/>
<path d="M165.8 592.4h18.1a9.4 9.4 0 0 1-18.1 0z" fill="#3a3f45"/>
<circle cx="202.3" cy="589.8" r="11.4" fill="#b9bec3"/><circle cx="202.3" cy="589.8" r="9.4" fill="#eceef0"/>
<path d="M193.2 592.4h18.1a9.4 9.4 0 0 1-18.1 0z" fill="#3a3f45"/>
<rect x="215.2" y="545.3" width="138.5" height="32.4" rx="1.5" fill="#3a3d41"/>
<rect x="221.4" y="546" width="5" height="2.2" fill="#d0d4d8"/><rect x="221.4" y="574.8" width="5" height="2.2" fill="#d0d4d8"/>
<rect x="230.9" y="546" width="5" height="2.2" fill="#d0d4d8"/><rect x="230.9" y="574.8" width="5" height="2.2" fill="#d0d4d8"/>
<rect x="240.5" y="546" width="5" height="2.2" fill="#d0d4d8"/><rect x="240.5" y="574.8" width="5" height="2.2" fill="#d0d4d8"/>
<rect x="250.0" y="546" width="5" height="2.2" fill="#d0d4d8"/><rect x="250.0" y="574.8" width="5" height="2.2" fill="#d0d4d8"/>
<rect x="259.6" y="546" width="5" height="2.2" fill="#d0d4d8"/><rect x="259.6" y="574.8" width="5" height="2.2" fill="#d0d4d8"/>
<rect x="269.1" y="546" width="5" height="2.2" fill="#d0d4d8"/><rect x="269.1" y="574.8" width="5" height="2.2" fill="#d0d4d8"/>
<rect x="278.6" y="546" width="5" height="2.2" fill="#d0d4d8"/><rect x="278.6" y="574.8" width="5" height="2.2" fill="#d0d4d8"/>
<rect x="288.2" y="546" width="5" height="2.2" fill="#d0d4d8"/><rect x="288.2" y="574.8" width="5" height="2.2" fill="#d0d4d8"/>
<rect x="297.7" y="546" width="5" height="2.2" fill="#d0d4d8"/><rect x="297.7" y="574.8" width="5" height="2.2" fill="#d0d4d8"/>
<rect x="307.3" y="546" width="5" height="2.2" fill="#d0d4d8"/><rect x="307.3" y="574.8" width="5" height="2.2" fill="#d0d4d8"/>
<rect x="316.8" y="546" width="5" height="2.2" fill="#d0d4d8"/><rect x="316.8" y="574.8" width="5" height="2.2" fill="#d0d4d8"/>
<rect x="326.3" y="546" width="5" height="2.2" fill="#d0d4d8"/><rect x="326.3" y="574.8" width="5" height="2.2" fill="#d0d4d8"/>
<rect x="335.9" y="546" width="5" height="2.2" fill="#d0d4d8"/><rect x="335.9" y="574.8" width="5" height="2.2" fill="#d0d4d8"/>
<rect x="345.4" y="546" width="5" height="2.2" fill="#d0d4d8"/><rect x="345.4" y="574.8" width="5" height="2.2" fill="#d0d4d8"/>
<circle cx="234.8" cy="561.4" r="3.2" fill="#26282b"/><circle cx="334.3" cy="561.4" r="3.2" fill="#26282b"/>
<rect x="210.4" y="465.5" width="11.8" height="4.6" fill="#c5cacf"/><rect x="213" y="465.5" width="6.6" height="4.6" fill="#efe9dd"/>
<rect x="210.4" y="483.3" width="11.8" height="4.6" fill="#c5cacf"/><rect x="213" y="483.3" width="6.6" height="4.6" fill="#efe9dd"/>
<rect x="210.4" y="492.7" width="11.8" height="4.6" fill="#c5cacf"/><rect x="213" y="492.7" width="6.6" height="4.6" fill="#efe9dd"/>
<rect x="327.8" y="483.9" width="12.4" height="4.6" fill="#c5cacf"/><rect x="331" y="483.9" width="6" height="4.6" fill="#54d94a"/>
<g fill="#e8eef4" font-weight="bold">
<text x="208.6" y="469.6" font-size="4.6" text-anchor="end">L</text><text x="208.6" y="487.4" font-size="4.8" text-anchor="end">TX</text><text x="208.6" y="496.8" font-size="4.8" text-anchor="end">RX</text>
<text x="341.6" y="488" font-size="4.8">ON</text>
<text x="268.4" y="458.4" font-size="6.6" textLength="60.6" lengthAdjust="spacingAndGlyphs">DIGITAL (PWM~)</text>
<text x="259" y="589" font-size="6.4" textLength="25.6" lengthAdjust="spacingAndGlyphs">POWER</text>
<text x="309.9" y="589" font-size="6.4" textLength="40.4" lengthAdjust="spacingAndGlyphs">ANALOG IN</text>
<text x="231.3" y="495.6" font-size="7.6" textLength="41" lengthAdjust="spacingAndGlyphs">ARDUINO</text>
</g>
<path d="M216.5 460.3H351" stroke="#e8eef4" stroke-width="0.9"/><path d="M240 581.6H287.5M297 581.6H351" stroke="#e8eef4" stroke-width="0.9"/>
<g fill="#e8eef4" font-size="6" font-weight="bold">
<text transform="translate(202.6 441.4) rotate(-90)" text-anchor="end">AREF</text>
<text transform="translate(212.1 441.4) rotate(-90)" text-anchor="end">GND</text>
<text transform="translate(221.6 441.4) rotate(-90)" text-anchor="end">13</text>
<text transform="translate(231.2 441.4) rotate(-90)" text-anchor="end">12</text>
<text transform="translate(240.7 441.4) rotate(-90)" text-anchor="end">~11</text>
<text transform="translate(250.2 441.4) rotate(-90)" text-anchor="end">~10</text>
<text transform="translate(259.7 441.4) rotate(-90)" text-anchor="end">~9</text>
<text transform="translate(269.2 441.4) rotate(-90)" text-anchor="end">8</text>
<text transform="translate(283.5 441.4) rotate(-90)" text-anchor="end">7</text>
<text transform="translate(293.0 441.4) rotate(-90)" text-anchor="end">~6</text>
<text transform="translate(302.6 441.4) rotate(-90)" text-anchor="end">~5</text>
<text transform="translate(312.2 441.4) rotate(-90)" text-anchor="end">4</text>
<text transform="translate(321.7 441.4) rotate(-90)" text-anchor="end">~3</text>
<text transform="translate(331.3 441.4) rotate(-90)" text-anchor="end">2</text>
<text transform="translate(340.8 441.4) rotate(-90)" text-anchor="end">TX→1</text>
<text transform="translate(350.4 441.4) rotate(-90)" text-anchor="end">RX←0</text>
<text transform="translate(227.2 603.6) rotate(-90)" font-size="4.6">IOREF</text>
<text transform="translate(236.8 603.6) rotate(-90)" font-size="4.6">RESET</text>
<text transform="translate(246.4 603.6) rotate(-90)" font-size="4.6">3.3V</text>
<text transform="translate(255.9 603.6) rotate(-90)" font-size="4.6">5V</text>
<text transform="translate(265.5 603.6) rotate(-90)" font-size="4.6">GND</text>
<text transform="translate(275.0 603.6) rotate(-90)" font-size="4.6">GND</text>
<text transform="translate(284.6 603.6) rotate(-90)" font-size="4.6">Vin</text>
<text transform="translate(302.7 603.6) rotate(-90)">A0</text>
<text transform="translate(312.3 603.6) rotate(-90)">A1</text>
<text transform="translate(321.9 603.6) rotate(-90)">A2</text>
<text transform="translate(331.5 603.6) rotate(-90)">A3</text>
<text transform="translate(341.1 603.6) rotate(-90)">A4</text>
<text transform="translate(350.7 603.6) rotate(-90)">A5</text>
</g>
<path d="M251.8 476.7c-3-5-6.6-8.4-11.6-8.4a8.4 8.4 0 0 0 0 16.8c5 0 8.600-3.400 11.6-8.400c3-5 6.600-8.400 11.600-8.400a8.400 8.400 0 0 1 0 16.800c-5 0-8.600-3.400-11.600-8.400z" fill="none" stroke="#fff" stroke-width="3.600"/>
<path d="M236.800 476.700h6.800M259.800 476.700h7M263.300 473.200v7" stroke="#fff" stroke-width="1.900" fill="none"/>
<text x="284.2" y="483" font-size="17.4" fill="#fff" textLength="35" lengthAdjust="spacingAndGlyphs" style="font-weight:normal" stroke="#2e71a6" stroke-width="0.5">UNO</text>
<path d="M310.4 432.6V358.1q0-9 9-9H691.1q9 0 9 9V470.5" fill="none" stroke="#e8861a" stroke-width="2.8" stroke-linecap="round" stroke-linejoin="round"/>
<path d="M300.9 432.6V375.4q0-9 9-9H681.4q9 0 9 9V470.5" fill="none" stroke="#f0d32c" stroke-width="2.8" stroke-linecap="round" stroke-linejoin="round"/>
<path d="M319.7 432.6V386.2q0-9 9-9H700.2q9 0 9 9V470.5" fill="none" stroke="#c2278f" stroke-width="2.8" stroke-linecap="round" stroke-linejoin="round"/>
<path d="M291.4 432.6V395.1q0-9 9-9H709.9q9 0 9 9V470.5" fill="none" stroke="#3fae49" stroke-width="2.8" stroke-linecap="round" stroke-linejoin="round"/>
<path d="M238.8 432.6V401.0q0-9 9-9H634.7q9 0 9 9V470.5" fill="none" stroke="#6dbdd1" stroke-width="2.8" stroke-linecap="round" stroke-linejoin="round"/>
<path d="M229.4 432.6V410.8q0-9 9-9H615.6q9 0 9 9V470.5" fill="none" stroke="#1a87c4" stroke-width="2.8" stroke-linecap="round" stroke-linejoin="round"/>
<path d="M282.1 432.6V406.9q0-9 9-9H458q10 0 18 5.5L512 429.500" fill="none" stroke="#9b9ea1" stroke-width="2.8" stroke-linecap="round" stroke-linejoin="round"/>
<path d="M329.2 432.6V418.7q0-9 9-9H444q9 0 15 6L492 447" fill="none" stroke="#9b9ea1" stroke-width="2.8" stroke-linecap="round" stroke-linejoin="round"/>
<path d="M263.6 611V620.800q0 6 6 6H385.700q6 0 6-6V438.700q0-6 6-6H481" fill="none" stroke="#303336" stroke-width="2.8" stroke-linecap="round" stroke-linejoin="round"/>
<path d="M253.6 611V632q0 6 6 6H394.100q6 0 6-6V448.100q0-6 6-6H481" fill="none" stroke="#dc3232" stroke-width="2.8" stroke-linecap="round" stroke-linejoin="round"/>
<path d="M479 433L433.500 463q-8.300 5.500-8.300 15V595.600q0 6 6 6H474.500" fill="none" stroke="#303336" stroke-width="2.8" stroke-linecap="round" stroke-linejoin="round"/>
<path d="M479 442.600L442.500 472q-7.900 6.400-7.900 16V605.100q0 6 6 6H474.500" fill="none" stroke="#dc3232" stroke-width="2.8" stroke-linecap="round" stroke-linejoin="round"/>
<path d="M596.6 431V470.5" fill="none" stroke="#303336" stroke-width="3" stroke-linecap="round" stroke-linejoin="round"/>
<path d="M605.5 440.4V470.5" fill="none" stroke="#dc3232" stroke-width="3" stroke-linecap="round" stroke-linejoin="round"/>
<path d="M614.9 431.0V470.5" stroke="#9c9fa3" stroke-width="1.5"/><path d="M610.2 442.4c0-3 3.2-4 4.7-4s4.7 1 4.7 4v2.2c0 1.4-1 1.6-1 3v6.8c0 1.4 1 1.6 1 3v2.2c0 3-3.2 4-4.7 4s-4.7-1-4.7-4v-2.2c0-1.4 1-1.6 1-3v-6.8c0-1.4-1-1.6-1-3z" fill="#dfbd80"/><rect x="611.9" y="442.6" width="6" height="0.8" fill="#b8923a"/><rect x="611.2" y="448.5" width="7.4" height="2.7" fill="#e8231a"/><rect x="611.2" y="453.5" width="7.4" height="2.7" fill="#111"/><rect x="611.2" y="458.2" width="7.4" height="2.6" fill="#9a5a16"/>
<path d="M634.2 431V470.5" fill="none" stroke="#303336" stroke-width="3" stroke-linecap="round" stroke-linejoin="round"/>
<path d="M728.3 440.4V470.5" fill="none" stroke="#dc3232" stroke-width="3" stroke-linecap="round" stroke-linejoin="round"/>
<path d="M738.0 431.0V470.5" stroke="#9c9fa3" stroke-width="1.5"/><path d="M733.3 442.4c0-3 3.2-4 4.7-4s4.7 1 4.7 4v2.2c0 1.4-1 1.6-1 3v6.8c0 1.4 1 1.6 1 3v2.2c0 3-3.2 4-4.7 4s-4.7-1-4.7-4v-2.2c0-1.4 1-1.6 1-3v-6.8c0-1.4-1-1.6-1-3z" fill="#dfbd80"/><rect x="735.0" y="442.6" width="6" height="0.8" fill="#b8923a"/><rect x="734.3" y="448.5" width="7.4" height="2.7" fill="#e8231a"/><rect x="734.3" y="453.5" width="7.4" height="2.7" fill="#111"/><rect x="734.3" y="458.2" width="7.4" height="2.6" fill="#9a5a16"/>
<path d="M502.1 572.6V611.6" fill="none" stroke="#dc3232" stroke-width="3" stroke-linecap="round" stroke-linejoin="round"/>
<path d="M539.7 572.6V611.6" fill="none" stroke="#dc3232" stroke-width="3" stroke-linecap="round" stroke-linejoin="round"/>
<path d="M521.0 563.4V602.0" stroke="#9c9fa3" stroke-width="1.5"/><path d="M516.3 573.4c0-3 3.2-4 4.7-4s4.7 1 4.7 4v2.2c0 1.4-1 1.6-1 3v6.2c0 1.4 1 1.6 1 3v2.2c0 3-3.2 4-4.7 4s-4.7-1-4.7-4v-2.2c0-1.4 1-1.6 1-3v-6.2c0-1.4-1-1.6-1-3z" fill="#dfbd80"/><rect x="518.0" y="573.6" width="6" height="0.8" fill="#b8923a"/><rect x="517.3" y="579.2" width="7.4" height="2.7" fill="#e8231a"/><rect x="517.3" y="584.2" width="7.4" height="2.7" fill="#111"/><rect x="517.3" y="588.7" width="7.4" height="2.6" fill="#9a5a16"/>
<path d="M558.6 563.4V602.0" stroke="#9c9fa3" stroke-width="1.5"/><path d="M553.9 573.4c0-3 3.2-4 4.7-4s4.7 1 4.7 4v2.2c0 1.4-1 1.6-1 3v6.2c0 1.4 1 1.6 1 3v2.2c0 3-3.2 4-4.7 4s-4.7-1-4.7-4v-2.2c0-1.4 1-1.6 1-3v-6.2c0-1.4-1-1.6-1-3z" fill="#dfbd80"/><rect x="555.6" y="573.6" width="6" height="0.8" fill="#b8923a"/><rect x="554.9" y="579.2" width="7.4" height="2.7" fill="#e8231a"/><rect x="554.9" y="584.2" width="7.4" height="2.7" fill="#111"/><rect x="554.9" y="588.7" width="7.4" height="2.6" fill="#9a5a16"/>
<circle cx="511.3" cy="503" r="22" fill="#bcd3ec" opacity="0.5"/>
<circle cx="548.6" cy="503" r="22" fill="#bcd3ec" opacity="0.5"/>
<rect x="501.0" y="514.4" width="20.6" height="18.8" rx="1.5" fill="#c6c8ca"/>
<circle cx="503.0" cy="517.0" r="2.1" fill="#6c7075"/>
<circle cx="503.0" cy="529.9" r="2.1" fill="#6c7075"/>
<circle cx="519.6" cy="517.0" r="2.1" fill="#6c7075"/>
<circle cx="519.6" cy="529.9" r="2.1" fill="#6c7075"/>
<circle cx="511.3" cy="522.8" r="6.3" fill="#3b4046"/>
<circle cx="511.3" cy="503" r="15.2" fill="#fff" stroke="#26292d" stroke-width="3.2"/>
<rect x="501.3" y="499.6" width="20" height="6.8" fill="#26292d"/>
<rect x="538.3" y="514.4" width="20.6" height="18.8" rx="1.5" fill="#c6c8ca"/>
<circle cx="540.3" cy="517.0" r="2.1" fill="#6c7075"/>
<circle cx="540.3" cy="529.9" r="2.1" fill="#6c7075"/>
<circle cx="556.9" cy="517.0" r="2.1" fill="#6c7075"/>
<circle cx="556.9" cy="529.9" r="2.1" fill="#6c7075"/>
<circle cx="548.6" cy="522.8" r="6.3" fill="#3b4046"/>
<circle cx="548.6" cy="503" r="15.2" fill="#fff" stroke="#26292d" stroke-width="3.2"/>
<rect x="538.6" y="499.6" width="20" height="6.8" fill="#26292d"/>
<rect x="571" y="492.3" width="296.2" height="133.2" rx="2.5" fill="#4aa464"/>
<rect x="571" y="622.6" width="296.2" height="2.9" rx="1.4" fill="#3f9157"/>
<circle cx="579.1" cy="500.4" r="4.5" fill="#fbfbfb"/>
<circle cx="579.1" cy="617.4" r="4.5" fill="#fbfbfb"/>
<circle cx="859.1" cy="500.9" r="4.5" fill="#fbfbfb"/>
<circle cx="859.1" cy="617.4" r="4.5" fill="#fbfbfb"/>
<circle cx="596.0" cy="497" r="2.7" fill="#e7dc9a"/><circle cx="596.0" cy="497" r="1.1" fill="#4f7d4c"/>
<circle cx="605.4" cy="497" r="2.7" fill="#e7dc9a"/><circle cx="605.4" cy="497" r="1.1" fill="#4f7d4c"/>
<circle cx="614.8" cy="497" r="2.7" fill="#e7dc9a"/><circle cx="614.8" cy="497" r="1.1" fill="#4f7d4c"/>
<circle cx="624.3" cy="497" r="2.7" fill="#e7dc9a"/><circle cx="624.3" cy="497" r="1.1" fill="#4f7d4c"/>
<circle cx="633.7" cy="497" r="2.7" fill="#e7dc9a"/><circle cx="633.7" cy="497" r="1.1" fill="#4f7d4c"/>
<circle cx="643.1" cy="497" r="2.7" fill="#e7dc9a"/><circle cx="643.1" cy="497" r="1.1" fill="#4f7d4c"/>
<circle cx="652.5" cy="497" r="2.7" fill="#e7dc9a"/><circle cx="652.5" cy="497" r="1.1" fill="#4f7d4c"/>
<circle cx="661.9" cy="497" r="2.7" fill="#e7dc9a"/><circle cx="661.9" cy="497" r="1.1" fill="#4f7d4c"/>
<circle cx="671.4" cy="497" r="2.7" fill="#e7dc9a"/><circle cx="671.4" cy="497" r="1.1" fill="#4f7d4c"/>
<circle cx="680.8" cy="497" r="2.7" fill="#e7dc9a"/><circle cx="680.8" cy="497" r="1.1" fill="#4f7d4c"/>
<circle cx="690.2" cy="497" r="2.7" fill="#e7dc9a"/><circle cx="690.2" cy="497" r="1.1" fill="#4f7d4c"/>
<circle cx="699.6" cy="497" r="2.7" fill="#e7dc9a"/><circle cx="699.6" cy="497" r="1.1" fill="#4f7d4c"/>
<circle cx="709.0" cy="497" r="2.7" fill="#e7dc9a"/><circle cx="709.0" cy="497" r="1.1" fill="#4f7d4c"/>
<circle cx="718.5" cy="497" r="2.7" fill="#e7dc9a"/><circle cx="718.5" cy="497" r="1.1" fill="#4f7d4c"/>
<circle cx="727.9" cy="497" r="2.7" fill="#e7dc9a"/><circle cx="727.9" cy="497" r="1.1" fill="#4f7d4c"/>
<circle cx="737.3" cy="497" r="2.7" fill="#e7dc9a"/><circle cx="737.3" cy="497" r="1.1" fill="#4f7d4c"/>
<g font-size="3.6" fill="#dff0e2">
<text transform="translate(594.7 502) rotate(90)">GND</text>
<text transform="translate(604.1 502) rotate(90)">VCC</text>
<text transform="translate(613.5 502) rotate(90)">V0</text>
<text transform="translate(623.0 502) rotate(90)">RS</text>
<text transform="translate(632.4 502) rotate(90)">RW</text>
<text transform="translate(641.8 502) rotate(90)">E</text>
<text transform="translate(651.2 502) rotate(90)">DB0</text>
<text transform="translate(660.6 502) rotate(90)">DB1</text>
<text transform="translate(670.1 502) rotate(90)">DB2</text>
<text transform="translate(679.5 502) rotate(90)">DB3</text>
<text transform="translate(688.9 502) rotate(90)">DB4</text>
<text transform="translate(698.3 502) rotate(90)">DB5</text>
<text transform="translate(707.7 502) rotate(90)">DB6</text>
<text transform="translate(717.2 502) rotate(90)">DB7</text>
<text transform="translate(726.6 502) rotate(90)">LED</text>
<text transform="translate(736.0 502) rotate(90)">LED</text>
</g>
<rect x="587.4" y="513" width="263.6" height="93.4" rx="1.5" fill="#333537"/>
<rect x="596.4" y="529.9" width="245.3" height="58.8" fill="#2f4f96"/>
<rect x="772.5" y="538.2" width="10.8" height="19.6" fill="#3556a0" opacity="0.35"/>
<rect x="785.7" y="538.2" width="10.8" height="19.6" fill="#3556a0" opacity="0.35"/>
<rect x="798.9" y="538.2" width="10.8" height="19.6" fill="#3556a0" opacity="0.35"/>
<rect x="812.1" y="538.2" width="10.8" height="19.6" fill="#3556a0" opacity="0.35"/>
<path d="M614.00 538.40h2.05v2.3h-2.05zM614.00 540.90h2.05v2.3h-2.05zM614.00 543.40h2.05v2.3h-2.05zM614.00 545.90h2.05v2.3h-2.05zM614.00 548.40h2.05v2.3h-2.05zM614.00 550.90h2.05v2.3h-2.05zM614.00 553.40h2.05v2.3h-2.05zM616.20 538.40h2.05v2.3h-2.05zM616.20 545.90h2.05v2.3h-2.05zM618.40 538.40h2.05v2.3h-2.05zM618.40 545.90h2.05v2.3h-2.05zM620.60 538.40h2.05v2.3h-2.05zM620.60 545.90h2.05v2.3h-2.05zM622.80 540.90h2.05v2.3h-2.05zM622.80 543.40h2.05v2.3h-2.05zM627.21 543.40h2.05v2.3h-2.05zM627.21 545.90h2.05v2.3h-2.05zM627.21 548.40h2.05v2.3h-2.05zM627.21 550.90h2.05v2.3h-2.05zM627.21 553.40h2.05v2.3h-2.05zM629.41 545.90h2.05v2.3h-2.05zM631.61 543.40h2.05v2.3h-2.05zM633.81 543.40h2.05v2.3h-2.05zM636.01 545.90h2.05v2.3h-2.05zM640.42 545.90h2.05v2.3h-2.05zM640.42 548.40h2.05v2.3h-2.05zM640.42 550.90h2.05v2.3h-2.05zM642.62 543.40h2.05v2.3h-2.05zM642.62 548.40h2.05v2.3h-2.05zM642.62 553.40h2.05v2.3h-2.05zM644.82 543.40h2.05v2.3h-2.05zM644.82 548.40h2.05v2.3h-2.05zM644.82 553.40h2.05v2.3h-2.05zM647.02 543.40h2.05v2.3h-2.05zM647.02 548.40h2.05v2.3h-2.05zM647.02 553.40h2.05v2.3h-2.05zM649.22 545.90h2.05v2.3h-2.05zM649.22 548.40h2.05v2.3h-2.05zM653.63 545.90h2.05v2.3h-2.05zM653.63 553.40h2.05v2.3h-2.05zM655.83 543.40h2.05v2.3h-2.05zM655.83 548.40h2.05v2.3h-2.05zM655.83 553.40h2.05v2.3h-2.05zM658.03 543.40h2.05v2.3h-2.05zM658.03 548.40h2.05v2.3h-2.05zM658.03 553.40h2.05v2.3h-2.05zM660.23 543.40h2.05v2.3h-2.05zM660.23 548.40h2.05v2.3h-2.05zM660.23 553.40h2.05v2.3h-2.05zM662.43 543.40h2.05v2.3h-2.05zM662.43 550.90h2.05v2.3h-2.05zM666.84 545.90h2.05v2.3h-2.05zM666.84 553.40h2.05v2.3h-2.05zM669.04 543.40h2.05v2.3h-2.05zM669.04 548.40h2.05v2.3h-2.05zM669.04 553.40h2.05v2.3h-2.05zM671.24 543.40h2.05v2.3h-2.05zM671.24 548.40h2.05v2.3h-2.05zM671.24 553.40h2.05v2.3h-2.05zM673.44 543.40h2.05v2.3h-2.05zM673.44 548.40h2.05v2.3h-2.05zM673.44 553.40h2.05v2.3h-2.05zM675.64 543.40h2.05v2.3h-2.05zM675.64 550.90h2.05v2.3h-2.05zM693.26 545.90h2.05v2.3h-2.05zM693.26 548.40h2.05v2.3h-2.05zM693.26 550.90h2.05v2.3h-2.05zM695.46 543.40h2.05v2.3h-2.05zM695.46 548.40h2.05v2.3h-2.05zM695.46 553.40h2.05v2.3h-2.05zM697.66 543.40h2.05v2.3h-2.05zM697.66 548.40h2.05v2.3h-2.05zM697.66 553.40h2.05v2.3h-2.05zM699.86 543.40h2.05v2.3h-2.05zM699.86 548.40h2.05v2.3h-2.05zM699.86 553.40h2.05v2.3h-2.05zM702.06 545.90h2.05v2.3h-2.05zM702.06 548.40h2.05v2.3h-2.05zM708.67 543.40h2.05v2.3h-2.05zM708.67 553.40h2.05v2.3h-2.05zM710.87 538.40h2.05v2.3h-2.05zM710.87 543.40h2.05v2.3h-2.05zM710.87 545.90h2.05v2.3h-2.05zM710.87 548.40h2.05v2.3h-2.05zM710.87 550.90h2.05v2.3h-2.05zM710.87 553.40h2.05v2.3h-2.05zM713.07 553.40h2.05v2.3h-2.05zM719.68 543.40h2.05v2.3h-2.05zM721.88 543.40h2.05v2.3h-2.05zM724.08 538.40h2.05v2.3h-2.05zM724.08 540.90h2.05v2.3h-2.05zM724.08 543.40h2.05v2.3h-2.05zM724.08 545.90h2.05v2.3h-2.05zM724.08 548.40h2.05v2.3h-2.05zM724.08 550.90h2.05v2.3h-2.05zM726.28 543.40h2.05v2.3h-2.05zM726.28 553.40h2.05v2.3h-2.05zM728.48 543.40h2.05v2.3h-2.05zM728.48 550.90h2.05v2.3h-2.05zM732.89 538.40h2.05v2.3h-2.05zM732.89 540.90h2.05v2.3h-2.05zM732.89 543.40h2.05v2.3h-2.05zM732.89 545.90h2.05v2.3h-2.05zM732.89 548.40h2.05v2.3h-2.05zM732.89 550.90h2.05v2.3h-2.05zM732.89 553.40h2.05v2.3h-2.05zM735.09 545.90h2.05v2.3h-2.05zM737.29 543.40h2.05v2.3h-2.05zM739.49 543.40h2.05v2.3h-2.05zM741.69 545.90h2.05v2.3h-2.05zM741.69 548.40h2.05v2.3h-2.05zM741.69 550.90h2.05v2.3h-2.05zM741.69 553.40h2.05v2.3h-2.05zM746.10 545.90h2.05v2.3h-2.05zM746.10 548.40h2.05v2.3h-2.05zM746.10 550.90h2.05v2.3h-2.05zM748.30 543.40h2.05v2.3h-2.05zM748.30 548.40h2.05v2.3h-2.05zM748.30 553.40h2.05v2.3h-2.05zM750.50 543.40h2.05v2.3h-2.05zM750.50 548.40h2.05v2.3h-2.05zM750.50 553.40h2.05v2.3h-2.05zM752.70 543.40h2.05v2.3h-2.05zM752.70 548.40h2.05v2.3h-2.05zM752.70 553.40h2.05v2.3h-2.05zM754.90 545.90h2.05v2.3h-2.05zM754.90 548.40h2.05v2.3h-2.05zM759.31 543.40h2.05v2.3h-2.05zM759.31 545.90h2.05v2.3h-2.05zM759.31 548.40h2.05v2.3h-2.05zM759.31 550.90h2.05v2.3h-2.05zM759.31 553.40h2.05v2.3h-2.05zM761.51 545.90h2.05v2.3h-2.05zM763.71 543.40h2.05v2.3h-2.05zM765.91 543.40h2.05v2.3h-2.05zM768.11 545.90h2.05v2.3h-2.05zM614.00 560.75h2.05v2.3h-2.05zM614.00 563.25h2.05v2.3h-2.05zM614.00 565.75h2.05v2.3h-2.05zM614.00 568.25h2.05v2.3h-2.05zM614.00 570.75h2.05v2.3h-2.05zM614.00 573.25h2.05v2.3h-2.05zM614.00 575.75h2.05v2.3h-2.05zM616.20 568.25h2.05v2.3h-2.05zM616.20 573.25h2.05v2.3h-2.05zM618.40 565.75h2.05v2.3h-2.05zM618.40 575.75h2.05v2.3h-2.05zM620.60 565.75h2.05v2.3h-2.05zM620.60 575.75h2.05v2.3h-2.05zM622.80 568.25h2.05v2.3h-2.05zM622.80 570.75h2.05v2.3h-2.05zM622.80 573.25h2.05v2.3h-2.05zM627.21 565.75h2.05v2.3h-2.05zM627.21 568.25h2.05v2.3h-2.05zM627.21 570.75h2.05v2.3h-2.05zM627.21 573.25h2.05v2.3h-2.05zM629.41 575.75h2.05v2.3h-2.05zM631.61 575.75h2.05v2.3h-2.05zM633.81 573.25h2.05v2.3h-2.05zM636.01 565.75h2.05v2.3h-2.05zM636.01 568.25h2.05v2.3h-2.05zM636.01 570.75h2.05v2.3h-2.05zM636.01 573.25h2.05v2.3h-2.05zM636.01 575.75h2.05v2.3h-2.05zM640.42 565.75h2.05v2.3h-2.05zM642.62 565.75h2.05v2.3h-2.05zM644.82 560.75h2.05v2.3h-2.05zM644.82 563.25h2.05v2.3h-2.05zM644.82 565.75h2.05v2.3h-2.05zM644.82 568.25h2.05v2.3h-2.05zM644.82 570.75h2.05v2.3h-2.05zM644.82 573.25h2.05v2.3h-2.05zM647.02 565.75h2.05v2.3h-2.05zM647.02 575.75h2.05v2.3h-2.05zM649.22 565.75h2.05v2.3h-2.05zM649.22 573.25h2.05v2.3h-2.05zM653.63 565.75h2.05v2.3h-2.05zM655.83 565.75h2.05v2.3h-2.05zM658.03 560.75h2.05v2.3h-2.05zM658.03 563.25h2.05v2.3h-2.05zM658.03 565.75h2.05v2.3h-2.05zM658.03 568.25h2.05v2.3h-2.05zM658.03 570.75h2.05v2.3h-2.05zM658.03 573.25h2.05v2.3h-2.05zM660.23 565.75h2.05v2.3h-2.05zM660.23 575.75h2.05v2.3h-2.05zM662.43 565.75h2.05v2.3h-2.05zM662.43 573.25h2.05v2.3h-2.05zM666.84 568.25h2.05v2.3h-2.05zM666.84 570.75h2.05v2.3h-2.05zM666.84 573.25h2.05v2.3h-2.05zM669.04 565.75h2.05v2.3h-2.05zM669.04 575.75h2.05v2.3h-2.05zM671.24 565.75h2.05v2.3h-2.05zM671.24 575.75h2.05v2.3h-2.05zM673.44 565.75h2.05v2.3h-2.05zM673.44 575.75h2.05v2.3h-2.05zM675.64 568.25h2.05v2.3h-2.05zM675.64 570.75h2.05v2.3h-2.05zM675.64 573.25h2.05v2.3h-2.05zM680.05 565.75h2.05v2.3h-2.05zM680.05 568.25h2.05v2.3h-2.05zM680.05 570.75h2.05v2.3h-2.05zM680.05 573.25h2.05v2.3h-2.05zM680.05 575.75h2.05v2.3h-2.05zM682.25 568.25h2.05v2.3h-2.05zM684.45 565.75h2.05v2.3h-2.05zM686.65 565.75h2.05v2.3h-2.05zM688.85 568.25h2.05v2.3h-2.05zM688.85 570.75h2.05v2.3h-2.05zM688.85 573.25h2.05v2.3h-2.05zM688.85 575.75h2.05v2.3h-2.05zM706.47 565.75h2.05v2.3h-2.05zM708.67 565.75h2.05v2.3h-2.05zM710.87 560.75h2.05v2.3h-2.05zM710.87 563.25h2.05v2.3h-2.05zM710.87 565.75h2.05v2.3h-2.05zM710.87 568.25h2.05v2.3h-2.05zM710.87 570.75h2.05v2.3h-2.05zM710.87 573.25h2.05v2.3h-2.05zM713.07 565.75h2.05v2.3h-2.05zM713.07 575.75h2.05v2.3h-2.05zM715.27 565.75h2.05v2.3h-2.05zM715.27 573.25h2.05v2.3h-2.05zM719.68 568.25h2.05v2.3h-2.05zM719.68 570.75h2.05v2.3h-2.05zM719.68 573.25h2.05v2.3h-2.05zM721.88 565.75h2.05v2.3h-2.05zM721.88 575.75h2.05v2.3h-2.05zM724.08 565.75h2.05v2.3h-2.05zM724.08 575.75h2.05v2.3h-2.05zM726.28 565.75h2.05v2.3h-2.05zM726.28 575.75h2.05v2.3h-2.05zM728.48 568.25h2.05v2.3h-2.05zM728.48 570.75h2.05v2.3h-2.05zM728.48 573.25h2.05v2.3h-2.05zM746.10 568.25h2.05v2.3h-2.05zM746.10 575.75h2.05v2.3h-2.05zM748.30 565.75h2.05v2.3h-2.05zM748.30 570.75h2.05v2.3h-2.05zM748.30 575.75h2.05v2.3h-2.05zM750.50 565.75h2.05v2.3h-2.05zM750.50 570.75h2.05v2.3h-2.05zM750.50 575.75h2.05v2.3h-2.05zM752.70 565.75h2.05v2.3h-2.05zM752.70 570.75h2.05v2.3h-2.05zM752.70 575.75h2.05v2.3h-2.05zM754.90 565.75h2.05v2.3h-2.05zM754.90 573.25h2.05v2.3h-2.05zM759.31 565.75h2.05v2.3h-2.05zM761.51 565.75h2.05v2.3h-2.05zM763.71 560.75h2.05v2.3h-2.05zM763.71 563.25h2.05v2.3h-2.05zM763.71 565.75h2.05v2.3h-2.05zM763.71 568.25h2.05v2.3h-2.05zM763.71 570.75h2.05v2.3h-2.05zM763.71 573.25h2.05v2.3h-2.05zM765.91 565.75h2.05v2.3h-2.05zM765.91 575.75h2.05v2.3h-2.05zM768.11 565.75h2.05v2.3h-2.05zM768.11 573.25h2.05v2.3h-2.05zM772.52 573.25h2.05v2.3h-2.05zM774.72 565.75h2.05v2.3h-2.05zM774.72 570.75h2.05v2.3h-2.05zM774.72 575.75h2.05v2.3h-2.05zM776.92 565.75h2.05v2.3h-2.05zM776.92 570.75h2.05v2.3h-2.05zM776.92 575.75h2.05v2.3h-2.05zM779.12 568.25h2.05v2.3h-2.05zM779.12 570.75h2.05v2.3h-2.05zM779.12 573.25h2.05v2.3h-2.05zM779.12 575.75h2.05v2.3h-2.05zM781.32 575.75h2.05v2.3h-2.05zM785.73 565.75h2.05v2.3h-2.05zM785.73 568.25h2.05v2.3h-2.05zM785.73 570.75h2.05v2.3h-2.05zM785.73 573.25h2.05v2.3h-2.05zM785.73 575.75h2.05v2.3h-2.05zM787.93 568.25h2.05v2.3h-2.05zM790.13 565.75h2.05v2.3h-2.05zM792.33 565.75h2.05v2.3h-2.05zM794.53 568.25h2.05v2.3h-2.05zM798.94 565.75h2.05v2.3h-2.05zM801.14 565.75h2.05v2.3h-2.05zM803.34 560.75h2.05v2.3h-2.05zM803.34 563.25h2.05v2.3h-2.05zM803.34 565.75h2.05v2.3h-2.05zM803.34 568.25h2.05v2.3h-2.05zM803.34 570.75h2.05v2.3h-2.05zM803.34 573.25h2.05v2.3h-2.05zM805.54 565.75h2.05v2.3h-2.05zM805.54 575.75h2.05v2.3h-2.05zM807.74 565.75h2.05v2.3h-2.05zM807.74 573.25h2.05v2.3h-2.05zM816.55 560.75h2.05v2.3h-2.05zM816.55 563.25h2.05v2.3h-2.05zM816.55 565.75h2.05v2.3h-2.05zM816.55 568.25h2.05v2.3h-2.05zM816.55 570.75h2.05v2.3h-2.05zM816.55 575.75h2.05v2.3h-2.05z" fill="#dbe4f8"/>
<g filter="url(#bsh)">
<path d="M486.8 418.8H527.0a7 7 0 0 1 7 7V467.0a7 7 0 0 1-7 7H518.8L511.3 491L503.8 474.0H486.8a7 7 0 0 1-7-7V425.8a7 7 0 0 1 7-7z" fill="#fff" fill-opacity="0.93"/>
</g>
<text x="494.600" y="451.800" font-size="22.400" fill="#34495e">yes</text>
<g filter="url(#bsh)">
<path d="M529.0 418.8H570.2a7 7 0 0 1 7 7V467.0a7 7 0 0 1-7 7H556.1L548.6 491L541.1 474.0H529.0a7 7 0 0 1-7-7V425.8a7 7 0 0 1 7-7z" fill="#fff" fill-opacity="0.9"/>
</g>
<text x="535.800" y="451.800" font-size="22.400" fill="#34495e">no</text>
<defs><filter id="bsh" x="-20%" y="-20%" width="140%" height="150%"><feDropShadow dx="0" dy="1" stdDeviation="2" flood-color="#000" flood-opacity="0.12"/></filter></defs>
</svg><!--/CANVAS--></div>
<div id="cp">
  <div id="cptop">
<svg width="703" height="72" viewBox="924 144 703 72" style="position:absolute;left:0;top:0">
<rect x="1417.2" y="169.3" width="3.9" height="19.4" rx="1.6" fill="#8c99a6"/>
<path d="M1426.3 170.6q0-1.800 1.600-0.900l12.200 8q1 0.900 0 1.800l-12.200 8q-1.600 0.900-1.600-0.900z" fill="#8c99a6"/>
<path d="M1481.200 179.400c3.200-12.400 20.800-13.200 25.800-1.600" fill="none" stroke="#8c99a6" stroke-width="2.800" stroke-linecap="round"/>
<path d="M1508.200 173.200l-0.800 5.600l-5.400-1.400" fill="none" stroke="#8c99a6" stroke-width="2.600" stroke-linecap="round" stroke-linejoin="round"/>
<circle cx="1494.200" cy="184" r="5" fill="#8c99a6"/>
<rect x="1537.200" y="144" width="1" height="72" fill="#dddfe3"/>
</svg>
<div id="brd">1 (Arduino Uno R3)</div>
</div>
  <div id="ed">
    <div id="gut"></div>
    <div id="lines">
<div class="ln" style="top:6px">1</div>
<div class="cl" style="top:6px"><span class="c">//Bennett Dias - Lab 8</span></div>
<div class="ln" style="top:30px">2</div>
<div class="cl" style="top:30px"><span class="c">//Description - Utilizing an LCD display to ask questions</span></div>
<div class="ln" style="top:54px">3</div>
<div class="cl" style="top:54px"><span class="c">//Date - November 2 2023</span></div>
<div class="ln" style="top:78px">4</div>
<div class="ln" style="top:102px">5</div>
<div class="ln" style="top:126px">6</div>
<div class="cl" style="top:126px"><span class="p">#include &lt;LiquidCrystal.h&gt;</span></div>
<div class="ln" style="top:150px">7</div>
<div class="cl" style="top:150px"><span class="c">//VARIABLES ------------------------------------------------</span></div>
<div class="ln" style="top:174px">8</div>
<div class="ln" style="top:198px">9</div>
<div class="cl" style="top:198px"><span class="c">//Initialise the Serial LCD.</span></div>
<div class="ln" style="top:222px">10</div>
<div class="cl" style="top:222px">LiquidCrystal lcd( <span class="n">12</span>,<span class="n">11</span>,<span class="n">5</span>,<span class="n">4</span>,<span class="n">3</span>,<span class="n">2</span>);</div>
<div class="ln" style="top:246px">11</div>
<div class="ln" style="top:270px">12</div>
<div class="cl" style="top:270px"><span class="k">int</span> button = <span class="n">2</span>;</div>
<div class="ln" style="top:294px">13</div>
<div class="cl" style="top:294px"><span class="k">int</span> button2 = <span class="n">7</span>;</div>
<div class="ln" style="top:318px">14</div>
<div class="cl" style="top:318px"><span class="k">bool</span> buttonPressed = <span class="b">false</span>;</div>
<div class="ln" style="top:342px">15</div>
<div class="ln" style="top:366px">16</div>
<div class="cl" style="top:366px">String fish[] = {<span class="s">"Salmon"</span>, <span class="s">"Tuna"</span>, <span class="s">"Cod"</span>, <span class="s">"Bass"</span>, <span class="s">"Trout"</span>};</div>
<div class="ln" style="top:390px">17</div>
<div class="cl" style="top:390px">String planets[] = {<span class="s">"Mercury"</span>, <span class="s">"Venus"</span>, <span class="s">"Earth"</span>, <span class="s">"Mars"</span>, <span class="s">"Jupiter"</span>};</div>
<div class="ln" style="top:414px">18</div>
<div class="cl" style="top:414px">String trees[] = {<span class="s">"Maple"</span>, <span class="s">"Pine"</span>, <span class="s">"Birch"</span>, <span class="s">"Cedar"</span>, <span class="s">"Oak"</span>};</div>
<div class="ln" style="top:438px">19</div>
<div class="ln" style="top:462px">20</div>
<div class="cl" style="top:462px">String memory[<span class="n">3</span>];</div>
<div class="ln" style="top:486px">21</div>
<div class="ln" style="top:510px">22</div>
<div class="cl" style="top:510px">String questions[<span class="n">5</span>] = {<span class="s">"You like movies?"</span>, <span class="s">"TV shows?"</span>, <span class="s">"Books?"</span>};</div>
<div class="ln" style="top:534px">23</div>
<div class="ln" style="top:558px">24</div>
<div class="cl" style="top:558px"><span class="k">int</span> yesCount = <span class="n">0</span>;</div>
<div class="ln" style="top:582px">25</div>
<div class="cl" style="top:582px"><span class="k">int</span> noCount = <span class="n">0</span>;</div>
<div class="ln" style="top:606px">26</div>
<div class="ln" style="top:630px">27</div>
</div>
    <div id="hs"><div id="hsa"></div><div id="hst"></div></div>
  </div>
  <div id="sm"><svg width="40" height="30" viewBox="936 859 40 30" style="position:absolute;left:11px;top:9px">
<rect x="940" y="862.700" width="31" height="21.800" rx="1.500" fill="none" stroke="#111" stroke-width="2.200"/>
<rect x="939" y="861.600" width="33" height="6" rx="1.500" fill="#111"/>
<circle cx="944.100" cy="864.800" r="1" fill="#fff"/><circle cx="948.300" cy="864.800" r="1" fill="#fff"/><circle cx="952.500" cy="864.800" r="1" fill="#fff"/>
<rect x="959.800" y="867" width="2.200" height="17" fill="#111"/>
<rect x="963.600" y="878.600" width="6" height="3.600" fill="none" stroke="#111" stroke-width="1.600"/>
</svg><div id="smt">Serial Monitor</div></div>
  <div id="tip">
    <h3>How the debugger works</h3>
    <div class="li" style="top:76px">1.</div><div class="lt" style="top:76px">Add breakpoints by clicking the</div>
    <div class="lt" style="top:106px">line numbers.</div>
    <div class="li" style="top:136px">2.</div><div class="lt" style="top:136px">Hover over the variables</div>
    <div class="lt" style="top:166px">to see their value.</div>
    <div class="li" style="top:196px">3.</div><div class="lt" style="top:196px">Use the buttons above to run the</div>
    <div class="lt" style="top:226px">simulation or step one line.</div>
  </div></div>
</body>
</html>
